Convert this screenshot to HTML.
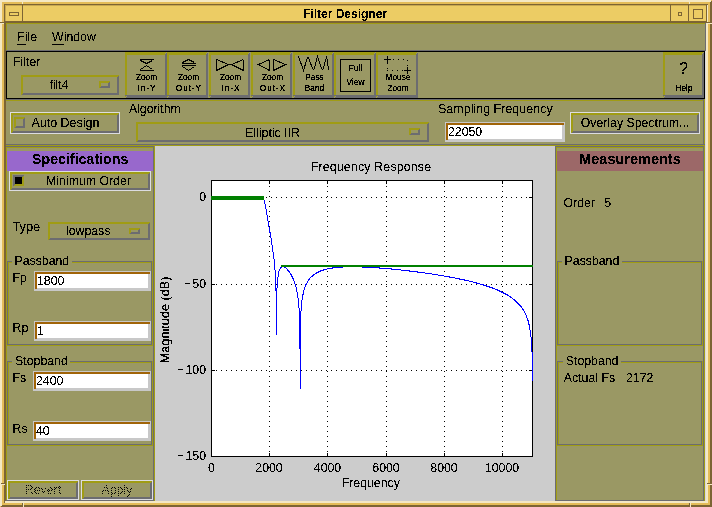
<!DOCTYPE html><html><head><meta charset="utf-8"><style>
html,body{margin:0;padding:0;}
body{width:712px;height:507px;position:relative;overflow:hidden;font-family:"Liberation Sans",sans-serif;}
div{position:absolute;box-sizing:border-box;}
.t{white-space:pre;filter:url(#crisp);-webkit-text-stroke:0.1px #000;}
</style></head><body>
<svg width="0" height="0" style="position:absolute"><filter id="crisp" x="-5%" y="-20%" width="110%" height="140%"><feComponentTransfer><feFuncA type="discrete" tableValues="0 1"/></feComponentTransfer></filter><filter id="crisp3" x="-20%" y="-5%" width="140%" height="110%"><feComponentTransfer><feFuncA type="discrete" tableValues="0 0 0 0 1 1 1 1 1 1"/></feComponentTransfer></filter><filter id="crisp4" x="-5%" y="-20%" width="110%" height="140%"><feComponentTransfer><feFuncA type="discrete" tableValues="0 0 0 1 1 1 1 1 1 1"/></feComponentTransfer></filter></svg>
<div style="left:0px;top:0px;width:712px;height:507px;background:#e4bc58;"></div>
<div style="left:0px;top:0px;width:711px;height:2px;background:#f4e8c4;"></div>
<div style="left:0px;top:0px;width:2px;height:506px;background:#f4e8c4;"></div>
<div style="left:710px;top:2px;width:2px;height:505px;background:#7c6434;"></div>
<div style="left:711px;top:1px;width:1px;height:1px;background:#7c6434;"></div>
<div style="left:2px;top:505px;width:710px;height:2px;background:#7c6434;"></div>
<div style="left:1px;top:506px;width:1px;height:1px;background:#7c6434;"></div>
<div style="left:4px;top:4px;width:704px;height:1px;background:#7c6434;"></div>
<div style="left:4px;top:4px;width:1px;height:499px;background:#7c6434;"></div>
<div style="left:5px;top:22px;width:1px;height:479px;background:#7c6434;"></div>
<div style="left:706px;top:22px;width:2px;height:481px;background:#f4e8c4;"></div>
<div style="left:707px;top:5px;width:1px;height:17px;background:#f4e8c4;"></div>
<div style="left:5px;top:501px;width:703px;height:2px;background:#f4e8c4;"></div>
<div style="left:5px;top:5px;width:702px;height:17px;background:#eccc64;"></div>
<div style="left:5px;top:5px;width:701px;height:1px;background:#c8a850;"></div>
<div style="left:5px;top:5px;width:1px;height:16px;background:#c8a850;"></div>
<div style="left:5px;top:21px;width:702px;height:2px;background:#7c6434;"></div>
<div style="left:706px;top:5px;width:1px;height:18px;background:#7c6434;"></div>
<div style="left:22px;top:5px;width:1px;height:17px;background:#7c6434;"></div>
<div style="left:670px;top:5px;width:1px;height:17px;background:#7c6434;"></div>
<div style="left:688px;top:5px;width:1px;height:17px;background:#7c6434;"></div>
<div style="left:9px;top:12px;width:10px;height:4px;background:#7c6434;"></div>
<div style="left:10px;top:13px;width:8px;height:2px;background:#eccc64;"></div>
<div style="left:678px;top:12px;width:4px;height:4px;background:#7c6434;"></div>
<div style="left:679px;top:13px;width:2px;height:2px;background:#eccc64;"></div>
<div style="left:693px;top:9px;width:10px;height:10px;background:#7c6434;"></div>
<div style="left:694px;top:10px;width:8px;height:8px;background:#eccc64;"></div>
<div style="left:22px;top:0px;width:1px;height:4px;background:#f4e8c4;"></div>
<div style="left:689px;top:0px;width:1px;height:4px;background:#f4e8c4;"></div>
<div style="left:0px;top:22px;width:4px;height:1px;background:#7c6434;"></div>
<div style="left:0px;top:23px;width:4px;height:1px;background:#f4e8c4;"></div>
<div style="left:706px;top:23px;width:6px;height:1px;background:#f4e8c4;"></div>
<div style="left:1px;top:483px;width:4px;height:1px;background:#7c6434;"></div>
<div style="left:1px;top:484px;width:4px;height:1px;background:#f4e8c4;"></div>
<div style="left:22px;top:503px;width:1px;height:4px;background:#7c6434;"></div>
<div style="left:23px;top:502px;width:1px;height:5px;background:#f4e8c4;"></div>
<div style="left:707px;top:483px;width:5px;height:1px;background:#7c6434;"></div>
<div style="left:707px;top:484px;width:5px;height:1px;background:#f4e8c4;"></div>
<div style="left:689px;top:503px;width:1px;height:4px;background:#7c6434;"></div>
<div style="left:690px;top:502px;width:1px;height:5px;background:#f4e8c4;"></div>
<div style="left:706px;top:22px;width:6px;height:1px;background:#7c6434;"></div>
<div class="t" style="left:45px;width:600px;text-align:center;top:8.34px;font-size:12px;line-height:12px;font-weight:bold;color:#000;">Filter Designer</div>
<div style="left:6px;top:23px;width:700px;height:478px;background:#9a9864;"></div>
<div style="left:705px;top:23px;width:1px;height:478px;background:#d8d8dc;"></div>
<div style="left:6px;top:23px;width:699px;height:1px;background:#a09c14;"></div>
<div style="left:6px;top:23px;width:1px;height:28px;background:#a09c14;"></div>
<div style="left:6px;top:50px;width:700px;height:1px;background:#6c6c70;"></div>
<div style="left:705px;top:23px;width:1px;height:28px;background:#6c6c70;"></div>
<div class="t" style="left:17.3px;top:31.29px;font-size:12.3px;line-height:12.3px;font-weight:normal;color:#000;">File</div>
<div style="left:17px;top:44px;width:9px;height:1px;background:#000;"></div>
<div class="t" style="left:52.1px;top:31.29px;font-size:12.3px;line-height:12.3px;font-weight:normal;color:#000;">Window</div>
<div style="left:52px;top:44px;width:12px;height:1px;background:#000;"></div>
<div style="left:6px;top:51px;width:699px;height:48px;background:#000;"></div>
<div style="left:7px;top:52px;width:697px;height:46px;background:#9a9864;"></div>
<div class="t" style="left:13.1px;top:56.39px;font-size:12.3px;line-height:12.3px;font-weight:normal;color:#000;">Filter</div>
<div style="left:21px;top:75px;width:98px;height:2px;background:#a09c14;"></div>
<div style="left:21px;top:75px;width:2px;height:20px;background:#a09c14;"></div>
<div style="left:22px;top:94px;width:97px;height:1px;background:#6c6c70;"></div>
<div style="left:118px;top:76px;width:1px;height:19px;background:#6c6c70;"></div>
<div style="left:23px;top:93px;width:96px;height:1px;background:#6c6c70;"></div>
<div style="left:117px;top:77px;width:1px;height:18px;background:#6c6c70;"></div>
<div class="t" style="left:-241px;width:600px;text-align:center;top:79.09px;font-size:12.3px;line-height:12.3px;font-weight:normal;color:#000;">filt4</div>
<div style="left:99px;top:81px;width:11px;height:2px;background:#a09c14;"></div>
<div style="left:99px;top:81px;width:2px;height:7px;background:#a09c14;"></div>
<div style="left:100px;top:87px;width:10px;height:1px;background:#6c6c70;"></div>
<div style="left:109px;top:82px;width:1px;height:6px;background:#6c6c70;"></div>
<div style="left:101px;top:86px;width:9px;height:1px;background:#6c6c70;"></div>
<div style="left:108px;top:83px;width:1px;height:5px;background:#6c6c70;"></div>
<div style="left:125px;top:52px;width:41px;height:1px;background:#a09c14;"></div>
<div style="left:125px;top:53px;width:40px;height:1px;background:#a09c14;"></div>
<div style="left:125px;top:54px;width:42px;height:1px;background:#a09c14;"></div>
<div style="left:125px;top:52px;width:1px;height:45px;background:#a09c14;"></div>
<div style="left:126px;top:52px;width:1px;height:44px;background:#a09c14;"></div>
<div style="left:126px;top:97px;width:41px;height:1px;background:#6c6c70;"></div>
<div style="left:127px;top:96px;width:40px;height:1px;background:#6c6c70;"></div>
<div style="left:125px;top:95px;width:42px;height:1px;background:#6c6c70;"></div>
<div style="left:166px;top:53px;width:1px;height:45px;background:#6c6c70;"></div>
<div style="left:165px;top:54px;width:1px;height:44px;background:#6c6c70;"></div>
<div style="left:167px;top:52px;width:40px;height:1px;background:#a09c14;"></div>
<div style="left:167px;top:53px;width:39px;height:1px;background:#a09c14;"></div>
<div style="left:167px;top:54px;width:41px;height:1px;background:#a09c14;"></div>
<div style="left:167px;top:52px;width:1px;height:45px;background:#a09c14;"></div>
<div style="left:168px;top:52px;width:1px;height:44px;background:#a09c14;"></div>
<div style="left:168px;top:97px;width:40px;height:1px;background:#6c6c70;"></div>
<div style="left:169px;top:96px;width:39px;height:1px;background:#6c6c70;"></div>
<div style="left:167px;top:95px;width:41px;height:1px;background:#6c6c70;"></div>
<div style="left:207px;top:53px;width:1px;height:45px;background:#6c6c70;"></div>
<div style="left:206px;top:54px;width:1px;height:44px;background:#6c6c70;"></div>
<div style="left:209px;top:52px;width:40px;height:1px;background:#a09c14;"></div>
<div style="left:209px;top:53px;width:39px;height:1px;background:#a09c14;"></div>
<div style="left:209px;top:54px;width:41px;height:1px;background:#a09c14;"></div>
<div style="left:209px;top:52px;width:1px;height:45px;background:#a09c14;"></div>
<div style="left:210px;top:52px;width:1px;height:44px;background:#a09c14;"></div>
<div style="left:210px;top:97px;width:40px;height:1px;background:#6c6c70;"></div>
<div style="left:211px;top:96px;width:39px;height:1px;background:#6c6c70;"></div>
<div style="left:209px;top:95px;width:41px;height:1px;background:#6c6c70;"></div>
<div style="left:249px;top:53px;width:1px;height:45px;background:#6c6c70;"></div>
<div style="left:248px;top:54px;width:1px;height:44px;background:#6c6c70;"></div>
<div style="left:251px;top:52px;width:40px;height:1px;background:#a09c14;"></div>
<div style="left:251px;top:53px;width:39px;height:1px;background:#a09c14;"></div>
<div style="left:251px;top:54px;width:41px;height:1px;background:#a09c14;"></div>
<div style="left:251px;top:52px;width:1px;height:45px;background:#a09c14;"></div>
<div style="left:252px;top:52px;width:1px;height:44px;background:#a09c14;"></div>
<div style="left:252px;top:97px;width:40px;height:1px;background:#6c6c70;"></div>
<div style="left:253px;top:96px;width:39px;height:1px;background:#6c6c70;"></div>
<div style="left:251px;top:95px;width:41px;height:1px;background:#6c6c70;"></div>
<div style="left:291px;top:53px;width:1px;height:45px;background:#6c6c70;"></div>
<div style="left:290px;top:54px;width:1px;height:44px;background:#6c6c70;"></div>
<div style="left:293px;top:52px;width:40px;height:1px;background:#a09c14;"></div>
<div style="left:293px;top:53px;width:39px;height:1px;background:#a09c14;"></div>
<div style="left:293px;top:54px;width:41px;height:1px;background:#a09c14;"></div>
<div style="left:293px;top:52px;width:1px;height:45px;background:#a09c14;"></div>
<div style="left:294px;top:52px;width:1px;height:44px;background:#a09c14;"></div>
<div style="left:294px;top:97px;width:40px;height:1px;background:#6c6c70;"></div>
<div style="left:295px;top:96px;width:39px;height:1px;background:#6c6c70;"></div>
<div style="left:293px;top:95px;width:41px;height:1px;background:#6c6c70;"></div>
<div style="left:333px;top:53px;width:1px;height:45px;background:#6c6c70;"></div>
<div style="left:332px;top:54px;width:1px;height:44px;background:#6c6c70;"></div>
<div style="left:334px;top:52px;width:41px;height:1px;background:#a09c14;"></div>
<div style="left:334px;top:53px;width:40px;height:1px;background:#a09c14;"></div>
<div style="left:334px;top:54px;width:42px;height:1px;background:#a09c14;"></div>
<div style="left:334px;top:52px;width:1px;height:45px;background:#a09c14;"></div>
<div style="left:335px;top:52px;width:1px;height:44px;background:#a09c14;"></div>
<div style="left:335px;top:97px;width:41px;height:1px;background:#6c6c70;"></div>
<div style="left:336px;top:96px;width:40px;height:1px;background:#6c6c70;"></div>
<div style="left:334px;top:95px;width:42px;height:1px;background:#6c6c70;"></div>
<div style="left:375px;top:53px;width:1px;height:45px;background:#6c6c70;"></div>
<div style="left:374px;top:54px;width:1px;height:44px;background:#6c6c70;"></div>
<div style="left:376px;top:52px;width:41px;height:1px;background:#a09c14;"></div>
<div style="left:376px;top:53px;width:40px;height:1px;background:#a09c14;"></div>
<div style="left:376px;top:54px;width:42px;height:1px;background:#a09c14;"></div>
<div style="left:376px;top:52px;width:1px;height:45px;background:#a09c14;"></div>
<div style="left:377px;top:52px;width:1px;height:44px;background:#a09c14;"></div>
<div style="left:377px;top:97px;width:41px;height:1px;background:#6c6c70;"></div>
<div style="left:378px;top:96px;width:40px;height:1px;background:#6c6c70;"></div>
<div style="left:376px;top:95px;width:42px;height:1px;background:#6c6c70;"></div>
<div style="left:417px;top:53px;width:1px;height:45px;background:#6c6c70;"></div>
<div style="left:416px;top:54px;width:1px;height:44px;background:#6c6c70;"></div>
<div style="left:663px;top:52px;width:40px;height:1px;background:#a09c14;"></div>
<div style="left:663px;top:53px;width:39px;height:1px;background:#a09c14;"></div>
<div style="left:663px;top:54px;width:41px;height:1px;background:#a09c14;"></div>
<div style="left:663px;top:52px;width:1px;height:45px;background:#a09c14;"></div>
<div style="left:664px;top:52px;width:1px;height:44px;background:#a09c14;"></div>
<div style="left:664px;top:97px;width:40px;height:1px;background:#6c6c70;"></div>
<div style="left:665px;top:96px;width:39px;height:1px;background:#6c6c70;"></div>
<div style="left:663px;top:95px;width:41px;height:1px;background:#6c6c70;"></div>
<div style="left:703px;top:53px;width:1px;height:45px;background:#6c6c70;"></div>
<div style="left:702px;top:54px;width:1px;height:44px;background:#6c6c70;"></div>
<svg style="position:absolute;left:0;top:0" width="712" height="507" shape-rendering="crispEdges"><path d="M139.5 59.5H153.5M139.5 70.5H153.5M140.5 60.5L146.5 63.5L152.5 60.5M140.5 69.5L146.5 65.5L152.5 69.5" stroke="#000" stroke-width="1" fill="none"/><path d="M181.5 63.5H195.5M181.5 65.5H195.5M182.5 62.5L188.5 59.5L194.5 62.5M182.5 66.5L188.5 70.5L194.5 66.5" stroke="#000" stroke-width="1" fill="none"/><path d="M216.5 59.5V70.5M216.5 59.5L228.5 64.5L216.5 70.5M243.5 59.5V70.5M243.5 59.5L231.5 64.5L243.5 70.5" stroke="#000" stroke-width="1" fill="none"/><path d="M269.5 59.5V70.5M269.5 59.5L258.5 64.5L269.5 70.5M273.5 59.5V70.5M273.5 59.5L285.5 64.5L273.5 70.5" stroke="#000" stroke-width="1" fill="none"/><path d="M298.5 56.5L303.5 70.5L306.5 60.5L307.5 57.5L308.5 57.5L309.5 60.5L312.5 68.5L313.5 69.5L314.5 68.5L316.5 59.5L317.5 56.5L318.5 59.5L321.5 68.5L322.5 69.5L323.5 68.5L325.5 60.5L326.5 57.5L327.5 60.5L328.5 70.5" stroke="#000" stroke-width="1" fill="none"/><rect x="340.5" y="59.5" width="30" height="32" stroke="#000" stroke-width="1" fill="none"/><path d="M384 59.5H391M387.5 56V64M404 70.5H411M407.5 67V74" stroke="#000" stroke-width="1" fill="none"/><path d="M393 59h1v1h-1zM398 59h1v1h-1zM403 59h1v1h-1zM407 60h1v1h-1zM407 65h1v1h-1zM387 68h1v1h-1zM387 70h1v1h-1zM392 70h1v1h-1zM397 70h1v1h-1zM402 70h1v1h-1z" fill="#000"/></svg>
<div class="t" style="left:-153.5px;width:600px;text-align:center;top:73.27px;font-size:8.3px;line-height:8.3px;font-weight:normal;color:#000;filter:url(#crisp4);-webkit-text-stroke:0">Zoom</div>
<div class="t" style="left:-153.05px;width:600px;text-align:center;top:84.27px;font-size:8.3px;line-height:8.3px;font-weight:normal;color:#000;filter:url(#crisp4);-webkit-text-stroke:0;letter-spacing:0.9px;">In-Y</div>
<div class="t" style="left:-111.5px;width:600px;text-align:center;top:73.27px;font-size:8.3px;line-height:8.3px;font-weight:normal;color:#000;filter:url(#crisp4);-webkit-text-stroke:0">Zoom</div>
<div class="t" style="left:-111.05000000000001px;width:600px;text-align:center;top:84.27px;font-size:8.3px;line-height:8.3px;font-weight:normal;color:#000;filter:url(#crisp4);-webkit-text-stroke:0;letter-spacing:0.9px;">Out-Y</div>
<div class="t" style="left:-69.5px;width:600px;text-align:center;top:73.27px;font-size:8.3px;line-height:8.3px;font-weight:normal;color:#000;filter:url(#crisp4);-webkit-text-stroke:0">Zoom</div>
<div class="t" style="left:-69.05000000000001px;width:600px;text-align:center;top:84.27px;font-size:8.3px;line-height:8.3px;font-weight:normal;color:#000;filter:url(#crisp4);-webkit-text-stroke:0;letter-spacing:0.9px;">In-X</div>
<div class="t" style="left:-27.5px;width:600px;text-align:center;top:73.27px;font-size:8.3px;line-height:8.3px;font-weight:normal;color:#000;filter:url(#crisp4);-webkit-text-stroke:0">Zoom</div>
<div class="t" style="left:-27.05000000000001px;width:600px;text-align:center;top:84.27px;font-size:8.3px;line-height:8.3px;font-weight:normal;color:#000;filter:url(#crisp4);-webkit-text-stroke:0;letter-spacing:0.9px;">Out-X</div>
<div class="t" style="left:14.5px;width:600px;text-align:center;top:73.27px;font-size:8.3px;line-height:8.3px;font-weight:normal;color:#000;filter:url(#crisp4);-webkit-text-stroke:0">Pass</div>
<div class="t" style="left:14.5px;width:600px;text-align:center;top:84.27px;font-size:8.3px;line-height:8.3px;font-weight:normal;color:#000;filter:url(#crisp4);-webkit-text-stroke:0;">Band</div>
<div class="t" style="left:98px;width:600px;text-align:center;top:73.27px;font-size:8.3px;line-height:8.3px;font-weight:normal;color:#000;filter:url(#crisp4);-webkit-text-stroke:0">Mouse</div>
<div class="t" style="left:98px;width:600px;text-align:center;top:84.27px;font-size:8.3px;line-height:8.3px;font-weight:normal;color:#000;filter:url(#crisp4);-webkit-text-stroke:0;">Zoom</div>
<div class="t" style="left:55.5px;width:600px;text-align:center;top:64.47px;font-size:8.3px;line-height:8.3px;font-weight:normal;color:#000;filter:url(#crisp4);-webkit-text-stroke:0">Full</div>
<div class="t" style="left:55.5px;width:600px;text-align:center;top:78.47px;font-size:8.3px;line-height:8.3px;font-weight:normal;color:#000;filter:url(#crisp4);-webkit-text-stroke:0">View</div>
<div class="t" style="left:383.5px;width:600px;text-align:center;top:60.96px;font-size:16px;line-height:16px;font-weight:normal;color:#000;">?</div>
<div class="t" style="left:384px;width:600px;text-align:center;top:83.97px;font-size:8.3px;line-height:8.3px;font-weight:normal;color:#000;filter:url(#crisp4);-webkit-text-stroke:0">Help</div>
<div style="left:6px;top:99px;width:699px;height:1px;background:#6c6c70;"></div>
<div style="left:6px;top:100px;width:698px;height:1px;background:#a09c14;"></div>
<div style="left:703px;top:100px;width:1px;height:45px;background:#6c6c70;"></div>
<div style="left:704px;top:99px;width:1px;height:47px;background:#a09c14;"></div>
<div style="left:10px;top:112px;width:110px;height:22px;background:#dcdce0;"></div>
<div style="left:11px;top:113px;width:108px;height:20px;background:#9a9864;"></div>
<div style="left:11px;top:113px;width:108px;height:2px;background:#a09c14;"></div>
<div style="left:11px;top:113px;width:2px;height:20px;background:#a09c14;"></div>
<div style="left:12px;top:132px;width:107px;height:1px;background:#6c6c70;"></div>
<div style="left:118px;top:114px;width:1px;height:19px;background:#6c6c70;"></div>
<div style="left:13px;top:131px;width:106px;height:1px;background:#6c6c70;"></div>
<div style="left:117px;top:115px;width:1px;height:18px;background:#6c6c70;"></div>
<div style="left:14px;top:117px;width:11px;height:2px;background:#a09c14;"></div>
<div style="left:14px;top:117px;width:2px;height:11px;background:#a09c14;"></div>
<div style="left:15px;top:127px;width:10px;height:1px;background:#6c6c70;"></div>
<div style="left:24px;top:118px;width:1px;height:10px;background:#6c6c70;"></div>
<div style="left:16px;top:126px;width:9px;height:1px;background:#6c6c70;"></div>
<div style="left:23px;top:119px;width:1px;height:9px;background:#6c6c70;"></div>
<div class="t" style="left:31.4px;top:117.12px;font-size:12.5px;line-height:12.5px;font-weight:normal;color:#000;">Auto Design</div>
<div class="t" style="left:128.9px;top:103.39px;font-size:12.3px;line-height:12.3px;font-weight:normal;color:#000;">Algorithm</div>
<div style="left:136px;top:122px;width:293px;height:2px;background:#a09c14;"></div>
<div style="left:136px;top:122px;width:2px;height:20px;background:#a09c14;"></div>
<div style="left:137px;top:141px;width:292px;height:1px;background:#6c6c70;"></div>
<div style="left:428px;top:123px;width:1px;height:19px;background:#6c6c70;"></div>
<div style="left:138px;top:140px;width:291px;height:1px;background:#6c6c70;"></div>
<div style="left:427px;top:124px;width:1px;height:18px;background:#6c6c70;"></div>
<div class="t" style="left:-27.5px;width:600px;text-align:center;top:126.79px;font-size:12.3px;line-height:12.3px;font-weight:normal;color:#000;">Elliptic IIR</div>
<div style="left:409px;top:128px;width:11px;height:2px;background:#a09c14;"></div>
<div style="left:409px;top:128px;width:2px;height:7px;background:#a09c14;"></div>
<div style="left:410px;top:134px;width:10px;height:1px;background:#6c6c70;"></div>
<div style="left:419px;top:129px;width:1px;height:6px;background:#6c6c70;"></div>
<div style="left:411px;top:133px;width:9px;height:1px;background:#6c6c70;"></div>
<div style="left:418px;top:130px;width:1px;height:5px;background:#6c6c70;"></div>
<div class="t" style="left:438.0px;top:103.22px;font-size:12.5px;line-height:12.5px;font-weight:normal;color:#000;">Sampling Frequency</div>
<div style="left:445px;top:122px;width:120px;height:20px;background:#c8c8c8;"></div>
<div style="left:446px;top:123px;width:118px;height:2px;background:#a06408;"></div>
<div style="left:446px;top:123px;width:2px;height:17px;background:#a06408;"></div>
<div style="left:448px;top:125px;width:114px;height:14px;background:#fff;"></div>
<div class="t" style="left:448px;top:125.59px;font-size:12.3px;line-height:12.3px;font-weight:normal;color:#000;">22050</div>
<div style="left:570px;top:112px;width:130px;height:22px;background:#dcdce0;"></div>
<div style="left:571px;top:113px;width:128px;height:20px;background:#9a9864;"></div>
<div style="left:571px;top:113px;width:128px;height:2px;background:#a09c14;"></div>
<div style="left:571px;top:113px;width:2px;height:20px;background:#a09c14;"></div>
<div style="left:572px;top:132px;width:127px;height:1px;background:#6c6c70;"></div>
<div style="left:698px;top:114px;width:1px;height:19px;background:#6c6c70;"></div>
<div style="left:573px;top:131px;width:126px;height:1px;background:#6c6c70;"></div>
<div style="left:697px;top:115px;width:1px;height:18px;background:#6c6c70;"></div>
<div class="t" style="left:580.7px;top:117.29px;font-size:12.3px;line-height:12.3px;font-weight:normal;color:#000;">Overlay Spectrum...</div>
<div style="left:6px;top:144px;width:699px;height:1px;background:#6c6c70;"></div>
<div style="left:6px;top:145px;width:699px;height:1px;background:#a09c14;"></div>
<div style="left:6px;top:146px;width:149px;height:355px;background:#9a9864;"></div>
<div style="left:6px;top:146px;width:149px;height:1px;background:#6c6c70;"></div>
<div style="left:6px;top:147px;width:148px;height:1px;background:#a09c14;"></div>
<div style="left:153px;top:147px;width:1px;height:354px;background:#6c6c70;"></div>
<div style="left:154px;top:146px;width:1px;height:355px;background:#a09c14;"></div>
<div style="left:6px;top:500px;width:148px;height:1px;background:#6c6c70;"></div>
<div style="left:6px;top:147px;width:1px;height:353px;background:#a09c14;"></div>
<div style="left:7px;top:151px;width:146px;height:20px;background:#9868cc;"></div>
<div class="t" style="left:-219.8px;width:600px;text-align:center;top:152.48px;font-size:14.2px;line-height:14.2px;font-weight:bold;color:#000;">Specifications</div>
<div style="left:9px;top:171px;width:142px;height:20px;background:#dcdce0;"></div>
<div style="left:10px;top:172px;width:140px;height:18px;background:#9a9864;"></div>
<div style="left:10px;top:172px;width:140px;height:2px;background:#a09c14;"></div>
<div style="left:10px;top:172px;width:2px;height:18px;background:#a09c14;"></div>
<div style="left:11px;top:189px;width:139px;height:1px;background:#6c6c70;"></div>
<div style="left:149px;top:173px;width:1px;height:17px;background:#6c6c70;"></div>
<div style="left:12px;top:188px;width:138px;height:1px;background:#6c6c70;"></div>
<div style="left:148px;top:174px;width:1px;height:16px;background:#6c6c70;"></div>
<div style="left:13px;top:175px;width:11px;height:2px;background:#6c6c70;"></div>
<div style="left:13px;top:175px;width:2px;height:11px;background:#6c6c70;"></div>
<div style="left:14px;top:185px;width:10px;height:1px;background:#a09c14;"></div>
<div style="left:23px;top:176px;width:1px;height:10px;background:#a09c14;"></div>
<div style="left:15px;top:184px;width:9px;height:1px;background:#a09c14;"></div>
<div style="left:22px;top:177px;width:1px;height:9px;background:#a09c14;"></div>
<div style="left:15px;top:177px;width:7px;height:7px;background:#000;"></div>
<div class="t" style="left:46.1px;top:175.49px;font-size:12.3px;line-height:12.3px;font-weight:normal;color:#000;">Minimum Order</div>
<div class="t" style="left:12.4px;top:221.26px;font-size:12.8px;line-height:12.8px;font-weight:normal;color:#000;">Type</div>
<div style="left:48px;top:222px;width:102px;height:2px;background:#a09c14;"></div>
<div style="left:48px;top:222px;width:2px;height:18px;background:#a09c14;"></div>
<div style="left:49px;top:239px;width:101px;height:1px;background:#6c6c70;"></div>
<div style="left:149px;top:223px;width:1px;height:17px;background:#6c6c70;"></div>
<div style="left:50px;top:238px;width:100px;height:1px;background:#6c6c70;"></div>
<div style="left:148px;top:224px;width:1px;height:16px;background:#6c6c70;"></div>
<div class="t" style="left:-211.8px;width:600px;text-align:center;top:224.89px;font-size:12.3px;line-height:12.3px;font-weight:normal;color:#000;">lowpass</div>
<div style="left:129px;top:228px;width:11px;height:2px;background:#a09c14;"></div>
<div style="left:129px;top:228px;width:2px;height:6px;background:#a09c14;"></div>
<div style="left:130px;top:233px;width:10px;height:1px;background:#6c6c70;"></div>
<div style="left:139px;top:229px;width:1px;height:5px;background:#6c6c70;"></div>
<div style="left:131px;top:232px;width:9px;height:1px;background:#6c6c70;"></div>
<div style="left:138px;top:230px;width:1px;height:4px;background:#6c6c70;"></div>
<div style="left:7px;top:261px;width:146px;height:85px;background:#a09c14;"></div>
<div style="left:7px;top:261px;width:145px;height:84px;background:#6c6c70;"></div>
<div style="left:8px;top:262px;width:143px;height:82px;background:#a09c14;"></div>
<div style="left:9px;top:263px;width:142px;height:81px;background:#9a9864;"></div>
<div style="left:11.5px;top:256px;width:60px;height:10px;background:#9a9864;"></div>
<div class="t" style="left:14.5px;top:255.09px;font-size:12.3px;line-height:12.3px;font-weight:normal;color:#000;">Passband</div>
<div style="left:7px;top:361px;width:146px;height:85px;background:#a09c14;"></div>
<div style="left:7px;top:361px;width:145px;height:84px;background:#6c6c70;"></div>
<div style="left:8px;top:362px;width:143px;height:82px;background:#a09c14;"></div>
<div style="left:9px;top:363px;width:142px;height:81px;background:#9a9864;"></div>
<div style="left:12.1px;top:356px;width:58px;height:10px;background:#9a9864;"></div>
<div class="t" style="left:15.1px;top:355.09px;font-size:12.3px;line-height:12.3px;font-weight:normal;color:#000;">Stopband</div>
<div class="t" style="left:12.4px;top:272.19px;font-size:12.3px;line-height:12.3px;font-weight:normal;color:#000;">Fp</div>
<div style="left:34px;top:271px;width:117px;height:20px;background:#c8c8c8;"></div>
<div style="left:35px;top:272px;width:115px;height:2px;background:#a06408;"></div>
<div style="left:35px;top:272px;width:2px;height:17px;background:#a06408;"></div>
<div style="left:37px;top:274px;width:111px;height:14px;background:#fff;"></div>
<div class="t" style="left:37px;top:274.59px;font-size:12.3px;line-height:12.3px;font-weight:normal;color:#000;">1800</div>
<div class="t" style="left:12.6px;top:321.59px;font-size:12.3px;line-height:12.3px;font-weight:normal;color:#000;">Rp</div>
<div style="left:34px;top:321px;width:117px;height:20px;background:#c8c8c8;"></div>
<div style="left:35px;top:322px;width:115px;height:2px;background:#a06408;"></div>
<div style="left:35px;top:322px;width:2px;height:17px;background:#a06408;"></div>
<div style="left:37px;top:324px;width:111px;height:14px;background:#fff;"></div>
<div class="t" style="left:37px;top:324.59px;font-size:12.3px;line-height:12.3px;font-weight:normal;color:#000;">1</div>
<div class="t" style="left:12.6px;top:372.09px;font-size:12.3px;line-height:12.3px;font-weight:normal;color:#000;">Fs</div>
<div style="left:33px;top:371px;width:118px;height:20px;background:#c8c8c8;"></div>
<div style="left:34px;top:372px;width:116px;height:2px;background:#a06408;"></div>
<div style="left:34px;top:372px;width:2px;height:17px;background:#a06408;"></div>
<div style="left:36px;top:374px;width:112px;height:14px;background:#fff;"></div>
<div class="t" style="left:36px;top:374.59px;font-size:12.3px;line-height:12.3px;font-weight:normal;color:#000;">2400</div>
<div class="t" style="left:12.6px;top:422.59px;font-size:12.3px;line-height:12.3px;font-weight:normal;color:#000;">Rs</div>
<div style="left:33px;top:421px;width:118px;height:20px;background:#c8c8c8;"></div>
<div style="left:34px;top:422px;width:116px;height:2px;background:#a06408;"></div>
<div style="left:34px;top:422px;width:2px;height:17px;background:#a06408;"></div>
<div style="left:36px;top:424px;width:112px;height:14px;background:#fff;"></div>
<div class="t" style="left:36px;top:424.59px;font-size:12.3px;line-height:12.3px;font-weight:normal;color:#000;">40</div>
<div style="left:7px;top:480px;width:72px;height:20px;background:#dcdce0;"></div>
<div style="left:8px;top:481px;width:70px;height:18px;background:#9a9864;"></div>
<div style="left:8px;top:481px;width:70px;height:2px;background:#a09c14;"></div>
<div style="left:8px;top:481px;width:2px;height:18px;background:#a09c14;"></div>
<div style="left:9px;top:498px;width:69px;height:1px;background:#6c6c70;"></div>
<div style="left:77px;top:482px;width:1px;height:17px;background:#6c6c70;"></div>
<div style="left:10px;top:497px;width:68px;height:1px;background:#6c6c70;"></div>
<div style="left:76px;top:483px;width:1px;height:16px;background:#6c6c70;"></div>
<div style="left:8px;top:482px;width:70px;height:16px;-webkit-mask-image:repeating-conic-gradient(#000 0 25%,transparent 0 50%);-webkit-mask-size:2px 2px;mask-image:repeating-conic-gradient(#000 0 25%,transparent 0 50%);mask-size:2px 2px;"><div class="t" style="left:0;width:70px;text-align:center;top:1.6px;font-size:12.3px;line-height:12.3px;">Revert</div></div>
<div style="left:81px;top:480px;width:72px;height:20px;background:#dcdce0;"></div>
<div style="left:82px;top:481px;width:70px;height:18px;background:#9a9864;"></div>
<div style="left:82px;top:481px;width:70px;height:2px;background:#a09c14;"></div>
<div style="left:82px;top:481px;width:2px;height:18px;background:#a09c14;"></div>
<div style="left:83px;top:498px;width:69px;height:1px;background:#6c6c70;"></div>
<div style="left:151px;top:482px;width:1px;height:17px;background:#6c6c70;"></div>
<div style="left:84px;top:497px;width:68px;height:1px;background:#6c6c70;"></div>
<div style="left:150px;top:483px;width:1px;height:16px;background:#6c6c70;"></div>
<div style="left:82px;top:482px;width:70px;height:16px;-webkit-mask-image:repeating-conic-gradient(#000 0 25%,transparent 0 50%);-webkit-mask-size:2px 2px;mask-image:repeating-conic-gradient(#000 0 25%,transparent 0 50%);mask-size:2px 2px;"><div class="t" style="left:0;width:70px;text-align:center;top:1.6px;font-size:12.3px;line-height:12.3px;">Apply</div></div>
<div style="left:155px;top:146px;width:400px;height:355px;background:#cccccc;"></div>
<svg style="position:absolute;left:0;top:0" width="712" height="507" shape-rendering="crispEdges"><rect x="211" y="180" width="322" height="277" fill="#fff"/><path d="M269 181h1v1h-1zM269 186h1v1h-1zM269 191h1v1h-1zM269 196h1v1h-1zM269 201h1v1h-1zM269 206h1v1h-1zM269 211h1v1h-1zM269 216h1v1h-1zM269 221h1v1h-1zM269 226h1v1h-1zM269 231h1v1h-1zM269 236h1v1h-1zM269 241h1v1h-1zM269 246h1v1h-1zM269 251h1v1h-1zM269 256h1v1h-1zM269 261h1v1h-1zM269 266h1v1h-1zM269 271h1v1h-1zM269 276h1v1h-1zM269 281h1v1h-1zM269 286h1v1h-1zM269 291h1v1h-1zM269 296h1v1h-1zM269 301h1v1h-1zM269 306h1v1h-1zM269 311h1v1h-1zM269 316h1v1h-1zM269 321h1v1h-1zM269 326h1v1h-1zM269 331h1v1h-1zM269 336h1v1h-1zM269 341h1v1h-1zM269 346h1v1h-1zM269 351h1v1h-1zM269 356h1v1h-1zM269 361h1v1h-1zM269 366h1v1h-1zM269 371h1v1h-1zM269 376h1v1h-1zM269 381h1v1h-1zM269 386h1v1h-1zM269 391h1v1h-1zM269 396h1v1h-1zM269 401h1v1h-1zM269 406h1v1h-1zM269 411h1v1h-1zM269 416h1v1h-1zM269 421h1v1h-1zM269 426h1v1h-1zM269 431h1v1h-1zM269 436h1v1h-1zM269 441h1v1h-1zM269 446h1v1h-1zM269 451h1v1h-1zM327 181h1v1h-1zM327 186h1v1h-1zM327 191h1v1h-1zM327 196h1v1h-1zM327 201h1v1h-1zM327 206h1v1h-1zM327 211h1v1h-1zM327 216h1v1h-1zM327 221h1v1h-1zM327 226h1v1h-1zM327 231h1v1h-1zM327 236h1v1h-1zM327 241h1v1h-1zM327 246h1v1h-1zM327 251h1v1h-1zM327 256h1v1h-1zM327 261h1v1h-1zM327 266h1v1h-1zM327 271h1v1h-1zM327 276h1v1h-1zM327 281h1v1h-1zM327 286h1v1h-1zM327 291h1v1h-1zM327 296h1v1h-1zM327 301h1v1h-1zM327 306h1v1h-1zM327 311h1v1h-1zM327 316h1v1h-1zM327 321h1v1h-1zM327 326h1v1h-1zM327 331h1v1h-1zM327 336h1v1h-1zM327 341h1v1h-1zM327 346h1v1h-1zM327 351h1v1h-1zM327 356h1v1h-1zM327 361h1v1h-1zM327 366h1v1h-1zM327 371h1v1h-1zM327 376h1v1h-1zM327 381h1v1h-1zM327 386h1v1h-1zM327 391h1v1h-1zM327 396h1v1h-1zM327 401h1v1h-1zM327 406h1v1h-1zM327 411h1v1h-1zM327 416h1v1h-1zM327 421h1v1h-1zM327 426h1v1h-1zM327 431h1v1h-1zM327 436h1v1h-1zM327 441h1v1h-1zM327 446h1v1h-1zM327 451h1v1h-1zM386 181h1v1h-1zM386 186h1v1h-1zM386 191h1v1h-1zM386 196h1v1h-1zM386 201h1v1h-1zM386 206h1v1h-1zM386 211h1v1h-1zM386 216h1v1h-1zM386 221h1v1h-1zM386 226h1v1h-1zM386 231h1v1h-1zM386 236h1v1h-1zM386 241h1v1h-1zM386 246h1v1h-1zM386 251h1v1h-1zM386 256h1v1h-1zM386 261h1v1h-1zM386 266h1v1h-1zM386 271h1v1h-1zM386 276h1v1h-1zM386 281h1v1h-1zM386 286h1v1h-1zM386 291h1v1h-1zM386 296h1v1h-1zM386 301h1v1h-1zM386 306h1v1h-1zM386 311h1v1h-1zM386 316h1v1h-1zM386 321h1v1h-1zM386 326h1v1h-1zM386 331h1v1h-1zM386 336h1v1h-1zM386 341h1v1h-1zM386 346h1v1h-1zM386 351h1v1h-1zM386 356h1v1h-1zM386 361h1v1h-1zM386 366h1v1h-1zM386 371h1v1h-1zM386 376h1v1h-1zM386 381h1v1h-1zM386 386h1v1h-1zM386 391h1v1h-1zM386 396h1v1h-1zM386 401h1v1h-1zM386 406h1v1h-1zM386 411h1v1h-1zM386 416h1v1h-1zM386 421h1v1h-1zM386 426h1v1h-1zM386 431h1v1h-1zM386 436h1v1h-1zM386 441h1v1h-1zM386 446h1v1h-1zM386 451h1v1h-1zM444 181h1v1h-1zM444 186h1v1h-1zM444 191h1v1h-1zM444 196h1v1h-1zM444 201h1v1h-1zM444 206h1v1h-1zM444 211h1v1h-1zM444 216h1v1h-1zM444 221h1v1h-1zM444 226h1v1h-1zM444 231h1v1h-1zM444 236h1v1h-1zM444 241h1v1h-1zM444 246h1v1h-1zM444 251h1v1h-1zM444 256h1v1h-1zM444 261h1v1h-1zM444 266h1v1h-1zM444 271h1v1h-1zM444 276h1v1h-1zM444 281h1v1h-1zM444 286h1v1h-1zM444 291h1v1h-1zM444 296h1v1h-1zM444 301h1v1h-1zM444 306h1v1h-1zM444 311h1v1h-1zM444 316h1v1h-1zM444 321h1v1h-1zM444 326h1v1h-1zM444 331h1v1h-1zM444 336h1v1h-1zM444 341h1v1h-1zM444 346h1v1h-1zM444 351h1v1h-1zM444 356h1v1h-1zM444 361h1v1h-1zM444 366h1v1h-1zM444 371h1v1h-1zM444 376h1v1h-1zM444 381h1v1h-1zM444 386h1v1h-1zM444 391h1v1h-1zM444 396h1v1h-1zM444 401h1v1h-1zM444 406h1v1h-1zM444 411h1v1h-1zM444 416h1v1h-1zM444 421h1v1h-1zM444 426h1v1h-1zM444 431h1v1h-1zM444 436h1v1h-1zM444 441h1v1h-1zM444 446h1v1h-1zM444 451h1v1h-1zM502 181h1v1h-1zM502 186h1v1h-1zM502 191h1v1h-1zM502 196h1v1h-1zM502 201h1v1h-1zM502 206h1v1h-1zM502 211h1v1h-1zM502 216h1v1h-1zM502 221h1v1h-1zM502 226h1v1h-1zM502 231h1v1h-1zM502 236h1v1h-1zM502 241h1v1h-1zM502 246h1v1h-1zM502 251h1v1h-1zM502 256h1v1h-1zM502 261h1v1h-1zM502 266h1v1h-1zM502 271h1v1h-1zM502 276h1v1h-1zM502 281h1v1h-1zM502 286h1v1h-1zM502 291h1v1h-1zM502 296h1v1h-1zM502 301h1v1h-1zM502 306h1v1h-1zM502 311h1v1h-1zM502 316h1v1h-1zM502 321h1v1h-1zM502 326h1v1h-1zM502 331h1v1h-1zM502 336h1v1h-1zM502 341h1v1h-1zM502 346h1v1h-1zM502 351h1v1h-1zM502 356h1v1h-1zM502 361h1v1h-1zM502 366h1v1h-1zM502 371h1v1h-1zM502 376h1v1h-1zM502 381h1v1h-1zM502 386h1v1h-1zM502 391h1v1h-1zM502 396h1v1h-1zM502 401h1v1h-1zM502 406h1v1h-1zM502 411h1v1h-1zM502 416h1v1h-1zM502 421h1v1h-1zM502 426h1v1h-1zM502 431h1v1h-1zM502 436h1v1h-1zM502 441h1v1h-1zM502 446h1v1h-1zM502 451h1v1h-1zM216 197h1v1h-1zM221 197h1v1h-1zM226 197h1v1h-1zM231 197h1v1h-1zM236 197h1v1h-1zM241 197h1v1h-1zM246 197h1v1h-1zM251 197h1v1h-1zM256 197h1v1h-1zM261 197h1v1h-1zM266 197h1v1h-1zM271 197h1v1h-1zM276 197h1v1h-1zM281 197h1v1h-1zM286 197h1v1h-1zM291 197h1v1h-1zM296 197h1v1h-1zM301 197h1v1h-1zM306 197h1v1h-1zM311 197h1v1h-1zM316 197h1v1h-1zM321 197h1v1h-1zM326 197h1v1h-1zM331 197h1v1h-1zM336 197h1v1h-1zM341 197h1v1h-1zM346 197h1v1h-1zM351 197h1v1h-1zM356 197h1v1h-1zM361 197h1v1h-1zM366 197h1v1h-1zM371 197h1v1h-1zM376 197h1v1h-1zM381 197h1v1h-1zM386 197h1v1h-1zM391 197h1v1h-1zM396 197h1v1h-1zM401 197h1v1h-1zM406 197h1v1h-1zM411 197h1v1h-1zM416 197h1v1h-1zM421 197h1v1h-1zM426 197h1v1h-1zM431 197h1v1h-1zM436 197h1v1h-1zM441 197h1v1h-1zM446 197h1v1h-1zM451 197h1v1h-1zM456 197h1v1h-1zM461 197h1v1h-1zM466 197h1v1h-1zM471 197h1v1h-1zM476 197h1v1h-1zM481 197h1v1h-1zM486 197h1v1h-1zM491 197h1v1h-1zM496 197h1v1h-1zM501 197h1v1h-1zM506 197h1v1h-1zM511 197h1v1h-1zM516 197h1v1h-1zM521 197h1v1h-1zM526 197h1v1h-1zM531 197h1v1h-1zM216 284h1v1h-1zM221 284h1v1h-1zM226 284h1v1h-1zM231 284h1v1h-1zM236 284h1v1h-1zM241 284h1v1h-1zM246 284h1v1h-1zM251 284h1v1h-1zM256 284h1v1h-1zM261 284h1v1h-1zM266 284h1v1h-1zM271 284h1v1h-1zM276 284h1v1h-1zM281 284h1v1h-1zM286 284h1v1h-1zM291 284h1v1h-1zM296 284h1v1h-1zM301 284h1v1h-1zM306 284h1v1h-1zM311 284h1v1h-1zM316 284h1v1h-1zM321 284h1v1h-1zM326 284h1v1h-1zM331 284h1v1h-1zM336 284h1v1h-1zM341 284h1v1h-1zM346 284h1v1h-1zM351 284h1v1h-1zM356 284h1v1h-1zM361 284h1v1h-1zM366 284h1v1h-1zM371 284h1v1h-1zM376 284h1v1h-1zM381 284h1v1h-1zM386 284h1v1h-1zM391 284h1v1h-1zM396 284h1v1h-1zM401 284h1v1h-1zM406 284h1v1h-1zM411 284h1v1h-1zM416 284h1v1h-1zM421 284h1v1h-1zM426 284h1v1h-1zM431 284h1v1h-1zM436 284h1v1h-1zM441 284h1v1h-1zM446 284h1v1h-1zM451 284h1v1h-1zM456 284h1v1h-1zM461 284h1v1h-1zM466 284h1v1h-1zM471 284h1v1h-1zM476 284h1v1h-1zM481 284h1v1h-1zM486 284h1v1h-1zM491 284h1v1h-1zM496 284h1v1h-1zM501 284h1v1h-1zM506 284h1v1h-1zM511 284h1v1h-1zM516 284h1v1h-1zM521 284h1v1h-1zM526 284h1v1h-1zM531 284h1v1h-1zM216 370h1v1h-1zM221 370h1v1h-1zM226 370h1v1h-1zM231 370h1v1h-1zM236 370h1v1h-1zM241 370h1v1h-1zM246 370h1v1h-1zM251 370h1v1h-1zM256 370h1v1h-1zM261 370h1v1h-1zM266 370h1v1h-1zM271 370h1v1h-1zM276 370h1v1h-1zM281 370h1v1h-1zM286 370h1v1h-1zM291 370h1v1h-1zM296 370h1v1h-1zM301 370h1v1h-1zM306 370h1v1h-1zM311 370h1v1h-1zM316 370h1v1h-1zM321 370h1v1h-1zM326 370h1v1h-1zM331 370h1v1h-1zM336 370h1v1h-1zM341 370h1v1h-1zM346 370h1v1h-1zM351 370h1v1h-1zM356 370h1v1h-1zM361 370h1v1h-1zM366 370h1v1h-1zM371 370h1v1h-1zM376 370h1v1h-1zM381 370h1v1h-1zM386 370h1v1h-1zM391 370h1v1h-1zM396 370h1v1h-1zM401 370h1v1h-1zM406 370h1v1h-1zM411 370h1v1h-1zM416 370h1v1h-1zM421 370h1v1h-1zM426 370h1v1h-1zM431 370h1v1h-1zM436 370h1v1h-1zM441 370h1v1h-1zM446 370h1v1h-1zM451 370h1v1h-1zM456 370h1v1h-1zM461 370h1v1h-1zM466 370h1v1h-1zM471 370h1v1h-1zM476 370h1v1h-1zM481 370h1v1h-1zM486 370h1v1h-1zM491 370h1v1h-1zM496 370h1v1h-1zM501 370h1v1h-1zM506 370h1v1h-1zM511 370h1v1h-1zM516 370h1v1h-1zM521 370h1v1h-1zM526 370h1v1h-1zM531 370h1v1h-1zM269 180h1v4h-1zM269 453h1v4h-1zM327 180h1v4h-1zM327 453h1v4h-1zM386 180h1v4h-1zM386 453h1v4h-1zM444 180h1v4h-1zM444 453h1v4h-1zM502 180h1v4h-1zM502 453h1v4h-1zM211 197h4v1h-4zM529 197h4v1h-4zM211 284h4v1h-4zM529 284h4v1h-4zM211 370h4v1h-4zM529 370h4v1h-4z" fill="#000"/><path d="M211 180h322v1h-322zM211 456h322v1h-322zM211 180h1v277h-1zM532 180h1v277h-1z" fill="#000"/><polyline points="211.5,197.7 211.6,197.8 211.7,197.8 211.7,197.8 211.8,197.8 211.9,197.8 212.0,197.8 212.0,197.8 212.1,197.8 212.2,197.8 212.3,197.8 212.4,197.8 212.4,197.8 212.5,197.8 212.6,197.8 212.7,197.8 212.8,197.8 212.8,197.8 212.9,197.8 213.0,197.8 213.1,197.8 213.1,197.8 213.2,197.8 213.3,197.8 213.4,197.8 213.5,197.8 213.5,197.8 213.6,197.8 213.7,197.8 213.8,197.8 213.9,197.8 213.9,197.8 214.0,197.8 214.1,197.8 214.2,197.8 214.2,197.8 214.3,197.8 214.4,197.8 214.5,197.8 214.6,197.8 214.6,197.8 214.7,197.9 214.8,197.9 214.9,197.9 214.9,197.9 215.0,197.9 215.1,197.9 215.2,197.9 215.3,197.9 215.3,197.9 215.4,197.9 215.5,197.9 215.6,197.9 215.7,197.9 215.7,197.9 215.8,197.9 215.9,197.9 216.0,197.9 216.0,197.9 216.1,198.0 216.2,198.0 216.3,198.0 216.4,198.0 216.4,198.0 216.5,198.0 216.6,198.0 216.7,198.0 216.8,198.0 216.8,198.0 216.9,198.0 217.0,198.0 217.1,198.0 217.1,198.0 217.2,198.1 217.3,198.1 217.4,198.1 217.5,198.1 217.5,198.1 217.6,198.1 217.7,198.1 217.8,198.1 217.8,198.1 217.9,198.1 218.0,198.1 218.1,198.1 218.2,198.2 218.2,198.2 218.3,198.2 218.4,198.2 218.5,198.2 218.6,198.2 218.6,198.2 218.7,198.2 218.8,198.2 218.9,198.2 218.9,198.2 219.0,198.3 219.1,198.3 219.2,198.3 219.3,198.3 219.3,198.3 219.4,198.3 219.5,198.3 219.6,198.3 219.7,198.3 219.7,198.3 219.8,198.3 219.9,198.4 220.0,198.4 220.0,198.4 220.1,198.4 220.2,198.4 220.3,198.4 220.4,198.4 220.4,198.4 220.5,198.4 220.6,198.4 220.7,198.5 220.7,198.5 220.8,198.5 220.9,198.5 221.0,198.5 221.1,198.5 221.1,198.5 221.2,198.5 221.3,198.5 221.4,198.5 221.5,198.6 221.5,198.6 221.6,198.6 221.7,198.6 221.8,198.6 221.8,198.6 221.9,198.6 222.0,198.6 222.1,198.6 222.2,198.6 222.2,198.7 222.3,198.7 222.4,198.7 222.5,198.7 222.6,198.7 222.6,198.7 222.7,198.7 222.8,198.7 222.9,198.7 222.9,198.7 223.0,198.8 223.1,198.8 223.2,198.8 223.3,198.8 223.3,198.8 223.4,198.8 223.5,198.8 223.6,198.8 223.6,198.8 223.7,198.8 223.8,198.9 223.9,198.9 224.0,198.9 224.0,198.9 224.1,198.9 224.2,198.9 224.3,198.9 224.4,198.9 224.4,198.9 224.5,198.9 224.6,198.9 224.7,199.0 224.7,199.0 224.8,199.0 224.9,199.0 225.0,199.0 225.1,199.0 225.1,199.0 225.2,199.0 225.3,199.0 225.4,199.0 225.4,199.0 225.5,199.1 225.6,199.1 225.7,199.1 225.8,199.1 225.8,199.1 225.9,199.1 226.0,199.1 226.1,199.1 226.2,199.1 226.2,199.1 226.3,199.1 226.4,199.1 226.5,199.2 226.5,199.2 226.6,199.2 226.7,199.2 226.8,199.2 226.9,199.2 226.9,199.2 227.0,199.2 227.1,199.2 227.2,199.2 227.3,199.2 227.3,199.2 227.4,199.2 227.5,199.3 227.6,199.3 227.6,199.3 227.7,199.3 227.8,199.3 227.9,199.3 228.0,199.3 228.0,199.3 228.1,199.3 228.2,199.3 228.3,199.3 228.3,199.3 228.4,199.3 228.5,199.3 228.6,199.3 228.7,199.3 228.7,199.3 228.8,199.4 228.9,199.4 229.0,199.4 229.1,199.4 229.1,199.4 229.2,199.4 229.3,199.4 229.4,199.4 229.4,199.4 229.5,199.4 229.6,199.4 229.7,199.4 229.8,199.4 229.8,199.4 229.9,199.4 230.0,199.4 230.1,199.4 230.2,199.4 230.2,199.4 230.3,199.4 230.4,199.4 230.5,199.4 230.5,199.4 230.6,199.4 230.7,199.4 230.8,199.5 230.9,199.5 230.9,199.5 231.0,199.5 231.1,199.5 231.2,199.5 231.2,199.5 231.3,199.5 231.4,199.5 231.5,199.5 231.6,199.5 231.6,199.5 231.7,199.5 231.8,199.5 231.9,199.5 232.0,199.5 232.0,199.5 232.1,199.5 232.2,199.5 232.3,199.5 232.3,199.5 232.4,199.5 232.5,199.5 232.6,199.5 232.7,199.5 232.7,199.5 232.8,199.5 232.9,199.5 233.0,199.5 233.1,199.5 233.1,199.5 233.2,199.5 233.3,199.5 233.4,199.5 233.4,199.5 233.5,199.5 233.6,199.5 233.7,199.5 233.8,199.5 233.8,199.4 233.9,199.4 234.0,199.4 234.1,199.4 234.1,199.4 234.2,199.4 234.3,199.4 234.4,199.4 234.5,199.4 234.5,199.4 234.6,199.4 234.7,199.4 234.8,199.4 234.9,199.4 234.9,199.4 235.0,199.4 235.1,199.4 235.2,199.4 235.2,199.4 235.3,199.4 235.4,199.4 235.5,199.4 235.6,199.4 235.6,199.4 235.7,199.3 235.8,199.3 235.9,199.3 236.0,199.3 236.0,199.3 236.1,199.3 236.2,199.3 236.3,199.3 236.3,199.3 236.4,199.3 236.5,199.3 236.6,199.3 236.7,199.3 236.7,199.3 236.8,199.2 236.9,199.2 237.0,199.2 237.0,199.2 237.1,199.2 237.2,199.2 237.3,199.2 237.4,199.2 237.4,199.2 237.5,199.2 237.6,199.2 237.7,199.2 237.8,199.1 237.8,199.1 237.9,199.1 238.0,199.1 238.1,199.1 238.1,199.1 238.2,199.1 238.3,199.1 238.4,199.1 238.5,199.1 238.5,199.0 238.6,199.0 238.7,199.0 238.8,199.0 238.9,199.0 238.9,199.0 239.0,199.0 239.1,199.0 239.2,199.0 239.2,198.9 239.3,198.9 239.4,198.9 239.5,198.9 239.6,198.9 239.6,198.9 239.7,198.9 239.8,198.9 239.9,198.8 239.9,198.8 240.0,198.8 240.1,198.8 240.2,198.8 240.3,198.8 240.3,198.8 240.4,198.8 240.5,198.7 240.6,198.7 240.7,198.7 240.7,198.7 240.8,198.7 240.9,198.7 241.0,198.7 241.0,198.7 241.1,198.6 241.2,198.6 241.3,198.6 241.4,198.6 241.4,198.6 241.5,198.6 241.6,198.6 241.7,198.5 241.8,198.5 241.8,198.5 241.9,198.5 242.0,198.5 242.1,198.5 242.1,198.5 242.2,198.5 242.3,198.4 242.4,198.4 242.5,198.4 242.5,198.4 242.6,198.4 242.7,198.4 242.8,198.4 242.8,198.3 242.9,198.3 243.0,198.3 243.1,198.3 243.2,198.3 243.2,198.3 243.3,198.3 243.4,198.2 243.5,198.2 243.6,198.2 243.6,198.2 243.7,198.2 243.8,198.2 243.9,198.2 243.9,198.2 244.0,198.1 244.1,198.1 244.2,198.1 244.3,198.1 244.3,198.1 244.4,198.1 244.5,198.1 244.6,198.1 244.7,198.0 244.7,198.0 244.8,198.0 244.9,198.0 245.0,198.0 245.0,198.0 245.1,198.0 245.2,198.0 245.3,198.0 245.4,197.9 245.4,197.9 245.5,197.9 245.6,197.9 245.7,197.9 245.7,197.9 245.8,197.9 245.9,197.9 246.0,197.9 246.1,197.9 246.1,197.9 246.2,197.8 246.3,197.8 246.4,197.8 246.5,197.8 246.5,197.8 246.6,197.8 246.7,197.8 246.8,197.8 246.8,197.8 246.9,197.8 247.0,197.8 247.1,197.8 247.2,197.8 247.2,197.8 247.3,197.8 247.4,197.8 247.5,197.8 247.5,197.8 247.6,197.8 247.7,197.8 247.8,197.8 247.9,197.8 247.9,197.8 248.0,197.8 248.1,197.8 248.2,197.8 248.3,197.8 248.3,197.8 248.4,197.8 248.5,197.8 248.6,197.8 248.6,197.8 248.7,197.8 248.8,197.8 248.9,197.8 249.0,197.8 249.0,197.8 249.1,197.8 249.2,197.8 249.3,197.8 249.4,197.8 249.4,197.8 249.5,197.8 249.6,197.8 249.7,197.8 249.7,197.8 249.8,197.8 249.9,197.9 250.0,197.9 250.1,197.9 250.1,197.9 250.2,197.9 250.3,197.9 250.4,197.9 250.4,197.9 250.5,197.9 250.6,197.9 250.7,198.0 250.8,198.0 250.8,198.0 250.9,198.0 251.0,198.0 251.1,198.0 251.2,198.0 251.2,198.1 251.3,198.1 251.4,198.1 251.5,198.1 251.5,198.1 251.6,198.1 251.7,198.2 251.8,198.2 251.9,198.2 251.9,198.2 252.0,198.2 252.1,198.3 252.2,198.3 252.3,198.3 252.3,198.3 252.4,198.3 252.5,198.3 252.6,198.4 252.6,198.4 252.7,198.4 252.8,198.4 252.9,198.5 253.0,198.5 253.0,198.5 253.1,198.5 253.2,198.5 253.3,198.6 253.3,198.6 253.4,198.6 253.5,198.6 253.6,198.6 253.7,198.7 253.7,198.7 253.8,198.7 253.9,198.7 254.0,198.8 254.1,198.8 254.1,198.8 254.2,198.8 254.3,198.8 254.4,198.9 254.4,198.9 254.5,198.9 254.6,198.9 254.7,199.0 254.8,199.0 254.8,199.0 254.9,199.0 255.0,199.0 255.1,199.1 255.2,199.1 255.2,199.1 255.3,199.1 255.4,199.1 255.5,199.2 255.5,199.2 255.6,199.2 255.7,199.2 255.8,199.2 255.9,199.2 255.9,199.3 256.0,199.3 256.1,199.3 256.2,199.3 256.2,199.3 256.3,199.3 256.4,199.4 256.5,199.4 256.6,199.4 256.6,199.4 256.7,199.4 256.8,199.4 256.9,199.4 257.0,199.4 257.0,199.4 257.1,199.4 257.2,199.5 257.3,199.5 257.3,199.5 257.4,199.5 257.5,199.5 257.6,199.5 257.7,199.5 257.7,199.5 257.8,199.5 257.9,199.5 258.0,199.5 258.1,199.5 258.1,199.5 258.2,199.5 258.3,199.4 258.4,199.4 258.4,199.4 258.5,199.4 258.6,199.4 258.7,199.4 258.8,199.4 258.8,199.4 258.9,199.3 259.0,199.3 259.1,199.3 259.1,199.3 259.2,199.3 259.3,199.2 259.4,199.2 259.5,199.2 259.5,199.2 259.6,199.1 259.7,199.1 259.8,199.1 259.9,199.0 259.9,199.0 260.0,199.0 260.1,198.9 260.2,198.9 260.2,198.9 260.3,198.8 260.4,198.8 260.5,198.7 260.6,198.7 260.6,198.6 260.7,198.6 260.8,198.6 260.9,198.5 261.0,198.5 261.0,198.4 261.1,198.4 261.2,198.3 261.3,198.3 261.3,198.2 261.4,198.2 261.5,198.1 261.6,198.1 261.7,198.0 261.7,198.0 261.8,198.0 261.9,197.9 262.0,197.9 262.0,197.8 262.1,197.8 262.2,197.8 262.3,197.8 262.4,197.8 262.4,197.8 262.5,197.8 262.6,197.8 262.7,197.8 262.8,197.8 262.8,197.8 262.9,197.9 263.0,197.9 263.1,198.0 263.1,198.0 263.2,198.1 263.3,198.2 263.4,198.3 263.5,198.5 263.5,198.6 263.6,198.8 263.7,198.9 263.8,199.1 263.9,199.3 263.9,199.5 264.0,199.8 264.1,200.0 264.2,200.3 264.2,200.5 264.3,200.8 264.4,201.1 264.5,201.5 264.6,201.8 264.6,202.1 264.7,202.5 264.8,202.8 264.9,203.2 264.9,203.6 265.0,204.0 265.1,204.4 265.2,204.8 265.3,205.2 265.3,205.6 265.4,206.1 265.5,206.5 265.6,206.9 265.7,207.4 265.7,207.8 265.8,208.2 265.9,208.7 266.0,209.2 266.0,209.6 266.1,210.1 266.2,210.5 266.3,211.0 266.4,211.4 266.4,211.9 266.5,212.4 266.6,212.8 266.7,213.3 266.8,213.7 266.8,214.2 266.9,214.7 267.0,215.1 267.1,215.6 267.1,216.1 267.2,216.5 267.3,217.0 267.4,217.4 267.5,217.9 267.5,218.4 267.6,218.8 267.7,219.3 267.8,219.7 267.8,220.2 267.9,220.6 268.0,221.1 268.1,221.6 268.2,222.0 268.2,222.5 268.3,222.9 268.4,223.4 268.5,223.8 268.6,224.3 268.6,224.7 268.7,225.2 268.8,225.6 268.9,226.1 268.9,226.5 269.0,227.0 269.1,227.4 269.2,227.9 269.3,228.3 269.3,228.8 269.4,229.2 269.5,229.7 269.6,230.1 269.6,230.6 269.7,231.0 269.8,231.5 269.9,232.0 270.0,232.4 270.0,232.9 270.1,233.3 270.2,233.8 270.3,234.2 270.4,234.7 270.4,235.1 270.5,235.6 270.6,236.1 270.7,236.5 270.7,237.0 270.8,237.5 270.9,237.9 271.0,238.4 271.1,238.9 271.1,239.3 271.2,239.8 271.3,240.3 271.4,240.8 271.5,241.3 271.5,241.8 271.6,242.2 271.7,242.7 271.8,243.2 271.8,243.7 271.9,244.2 272.0,244.7 272.1,245.2 272.2,245.7 272.2,246.3 272.3,246.8 272.4,247.3 272.5,247.8 272.5,248.4 272.6,248.9 272.7,249.5 272.8,250.0 272.9,250.6 272.9,251.1 273.0,251.7 273.1,252.3 273.2,252.9 273.3,253.4 273.3,254.0 273.4,254.7 273.5,255.3 273.6,255.9 273.6,256.5 273.7,257.2 273.8,257.9 273.9,258.5 274.0,259.2 274.0,259.9 274.1,260.6 274.2,261.4 274.3,262.1 274.4,262.9 274.4,263.7 274.5,264.5 274.6,265.4 274.7,266.2 274.7,267.1 274.8,268.1 274.9,269.0 275.0,270.0 275.1,271.1 275.1,272.2 275.2,273.3 275.3,274.6 275.4,275.9 275.4,277.2 275.5,278.7 275.6,280.3 275.7,282.0 275.8,283.9 275.8,286.1 275.9,288.5 276.0,291.3 276.1,294.6 276.2,298.7 276.2,304.3 276.3,313.0 276.4,334.8 276.5,323.1 276.5,309.8 276.6,303.1 276.7,298.5 276.8,295.1 276.9,292.4 276.9,290.2 277.0,288.3 277.1,286.7 277.2,285.2 277.3,284.0 277.3,282.8 277.4,281.8 277.5,280.8 277.6,280.0 277.6,279.2 277.7,278.5 277.8,277.8 277.9,277.1 278.0,276.6 278.0,276.0 278.1,275.5 278.2,275.0 278.3,274.6 278.3,274.1 278.4,273.7 278.5,273.3 278.6,273.0 278.7,272.6 278.7,272.3 278.8,272.0 278.9,271.7 279.0,271.4 279.1,271.2 279.1,270.9 279.2,270.7 279.3,270.5 279.4,270.2 279.4,270.0 279.5,269.8 279.6,269.7 279.7,269.5 279.8,269.3 279.8,269.1 279.9,269.0 280.0,268.9 280.1,268.7 280.2,268.6 280.2,268.5 280.3,268.3 280.4,268.2 280.5,268.1 280.5,268.0 280.6,267.9 280.7,267.8 280.8,267.7 280.9,267.7 280.9,267.6 281.0,267.5 281.1,267.4 281.2,267.4 281.2,267.3 281.3,267.2 281.4,267.2 281.5,267.1 281.6,267.1 281.6,267.1 281.7,267.0 281.8,267.0 281.9,266.9 282.0,266.9 282.0,266.9 282.1,266.9 282.2,266.8 282.3,266.8 282.3,266.8 282.4,266.8 282.5,266.8 282.6,266.8 282.7,266.8 282.7,266.8 282.8,266.8 282.9,266.8 283.0,266.8 283.1,266.8 283.1,266.8 283.2,266.8 283.3,266.8 283.4,266.8 283.4,266.8 283.5,266.8 283.6,266.8 283.7,266.9 283.8,266.9 283.8,266.9 283.9,266.9 284.0,267.0 284.1,267.0 284.1,267.0 284.2,267.0 284.3,267.1 284.4,267.1 284.5,267.2 284.5,267.2 284.6,267.2 284.7,267.3 284.8,267.3 284.9,267.4 284.9,267.4 285.0,267.5 285.1,267.5 285.2,267.5 285.2,267.6 285.3,267.7 285.4,267.7 285.5,267.8 285.6,267.8 285.6,267.9 285.7,267.9 285.8,268.0 285.9,268.1 286.0,268.1 286.0,268.2 286.1,268.2 286.2,268.3 286.3,268.4 286.3,268.4 286.4,268.5 286.5,268.6 286.6,268.7 286.7,268.7 286.7,268.8 286.8,268.9 286.9,269.0 287.0,269.0 287.0,269.1 287.1,269.2 287.2,269.3 287.3,269.4 287.4,269.4 287.4,269.5 287.5,269.6 287.6,269.7 287.7,269.8 287.8,269.9 287.8,270.0 287.9,270.0 288.0,270.1 288.1,270.2 288.1,270.3 288.2,270.4 288.3,270.5 288.4,270.6 288.5,270.7 288.5,270.8 288.6,270.9 288.7,271.0 288.8,271.1 288.9,271.2 288.9,271.3 289.0,271.4 289.1,271.5 289.2,271.7 289.2,271.8 289.3,271.9 289.4,272.0 289.5,272.1 289.6,272.2 289.6,272.3 289.7,272.4 289.8,272.6 289.9,272.7 289.9,272.8 290.0,272.9 290.1,273.0 290.2,273.2 290.3,273.3 290.3,273.4 290.4,273.6 290.5,273.7 290.6,273.8 290.7,273.9 290.7,274.1 290.8,274.2 290.9,274.3 291.0,274.5 291.0,274.6 291.1,274.8 291.2,274.9 291.3,275.0 291.4,275.2 291.4,275.3 291.5,275.5 291.6,275.6 291.7,275.8 291.8,275.9 291.8,276.1 291.9,276.2 292.0,276.4 292.1,276.6 292.1,276.7 292.2,276.9 292.3,277.0 292.4,277.2 292.5,277.4 292.5,277.5 292.6,277.7 292.7,277.9 292.8,278.0 292.8,278.2 292.9,278.4 293.0,278.6 293.1,278.8 293.2,278.9 293.2,279.1 293.3,279.3 293.4,279.5 293.5,279.7 293.6,279.9 293.6,280.1 293.7,280.3 293.8,280.5 293.9,280.7 293.9,280.9 294.0,281.1 294.1,281.3 294.2,281.5 294.3,281.8 294.3,282.0 294.4,282.2 294.5,282.4 294.6,282.7 294.6,282.9 294.7,283.1 294.8,283.4 294.9,283.6 295.0,283.9 295.0,284.1 295.1,284.4 295.2,284.6 295.3,284.9 295.4,285.1 295.4,285.4 295.5,285.7 295.6,286.0 295.7,286.3 295.7,286.5 295.8,286.8 295.9,287.1 296.0,287.4 296.1,287.8 296.1,288.1 296.2,288.4 296.3,288.7 296.4,289.1 296.5,289.4 296.5,289.7 296.6,290.1 296.7,290.5 296.8,290.8 296.8,291.2 296.9,291.6 297.0,292.0 297.1,292.4 297.2,292.8 297.2,293.3 297.3,293.7 297.4,294.2 297.5,294.6 297.5,295.1 297.6,295.6 297.7,296.1 297.8,296.7 297.9,297.2 297.9,297.8 298.0,298.4 298.1,299.0 298.2,299.6 298.3,300.3 298.3,301.0 298.4,301.7 298.5,302.4 298.6,303.2 298.6,304.1 298.7,305.0 298.8,305.9 298.9,306.9 299.0,307.9 299.0,309.1 299.1,310.3 299.2,311.6 299.3,313.1 299.4,314.7 299.4,316.5 299.5,318.6 299.6,320.9 299.7,323.7 299.7,327.1 299.8,331.5 299.9,337.8 300.0,348.7 300.1,388.6 300.1,346.8 300.2,336.9 300.3,331.0 300.4,326.8 300.4,323.5 300.5,320.9 300.6,318.6 300.7,316.6 300.8,314.9 300.8,313.4 300.9,312.0 301.0,310.7 301.1,309.5 301.2,308.4 301.2,307.4 301.3,306.5 301.4,305.6 301.5,304.8 301.5,304.0 301.6,303.3 301.7,302.6 301.8,301.9 301.9,301.2 301.9,300.6 302.0,300.0 302.1,299.5 302.2,298.9 302.3,298.4 302.3,297.9 302.4,297.4 302.5,297.0 302.6,296.5 302.6,296.1 302.7,295.7 302.8,295.3 302.9,294.9 303.0,294.5 303.0,294.1 303.1,293.7 303.2,293.4 303.3,293.0 303.3,292.7 303.4,292.4 303.5,292.1 303.6,291.7 303.7,291.4 303.7,291.1 303.8,290.8 303.9,290.6 304.0,290.3 304.1,290.0 304.1,289.7 304.2,289.5 304.3,289.2 304.4,289.0 304.4,288.7 304.5,288.5 304.6,288.3 304.7,288.0 304.8,287.8 304.8,287.6 304.9,287.4 305.0,287.2 305.1,286.9 305.2,286.7 305.2,286.5 305.3,286.3 305.4,286.1 305.5,285.9 305.5,285.7 305.6,285.6 305.7,285.4 305.8,285.2 305.9,285.0 305.9,284.8 306.0,284.7 306.1,284.5 306.2,284.3 306.2,284.2 306.3,284.0 306.4,283.8 306.5,283.7 306.6,283.5 306.6,283.4 306.7,283.2 306.8,283.1 306.9,282.9 307.0,282.8 307.0,282.6 307.1,282.5 307.2,282.4 307.3,282.2 307.3,282.1 307.4,281.9 307.5,281.8 307.6,281.7 307.7,281.6 307.7,281.4 307.8,281.3 307.9,281.2 308.0,281.0 308.1,280.9 308.1,280.8 308.2,280.7 308.3,280.6 308.4,280.5 308.4,280.3 308.5,280.2 308.6,280.1 308.7,280.0 308.8,279.9 308.8,279.8 308.9,279.7 309.0,279.6 309.1,279.5 309.1,279.4 309.2,279.3 309.3,279.2 309.4,279.1 309.5,279.0 309.5,278.9 309.6,278.8 309.7,278.7 309.8,278.6 309.9,278.5 309.9,278.4 310.0,278.3 310.1,278.2 310.2,278.1 310.2,278.0 310.3,277.9 310.4,277.8 310.5,277.8 310.6,277.7 310.6,277.6 310.7,277.5 310.8,277.4 310.9,277.3 311.0,277.2 311.0,277.2 311.1,277.1 311.2,277.0 311.3,276.9 311.3,276.8 311.4,276.8 311.5,276.7 311.6,276.6 311.7,276.5 311.7,276.5 311.8,276.4 311.9,276.3 312.0,276.2 312.0,276.2 312.1,276.1 312.2,276.0 312.3,276.0 312.4,275.9 312.4,275.8 312.5,275.8 312.6,275.7 312.7,275.6 312.8,275.6 312.8,275.5 312.9,275.4 313.0,275.4 313.1,275.3 313.1,275.2 313.2,275.2 313.3,275.1 313.4,275.0 313.5,275.0 313.5,274.9 313.6,274.9 313.7,274.8 313.8,274.7 313.9,274.7 313.9,274.6 314.0,274.6 314.1,274.5 314.2,274.4 314.2,274.4 314.3,274.3 314.4,274.3 314.5,274.2 314.6,274.2 314.6,274.1 314.7,274.1 314.8,274.0 314.9,273.9 314.9,273.9 315.0,273.8 315.1,273.8 315.2,273.7 315.3,273.7 315.3,273.6 315.4,273.6 315.5,273.5 315.6,273.5 315.7,273.4 315.7,273.4 315.8,273.3 315.9,273.3 316.0,273.2 316.0,273.2 316.1,273.1 316.2,273.1 316.3,273.1 316.4,273.0 316.4,273.0 316.5,272.9 316.6,272.9 316.7,272.8 316.7,272.8 316.8,272.7 316.9,272.7 317.0,272.6 317.1,272.6 317.1,272.6 317.2,272.5 317.3,272.5 317.4,272.4 317.5,272.4 317.5,272.4 317.6,272.3 317.7,272.3 317.8,272.2 317.8,272.2 317.9,272.2 318.0,272.1 318.1,272.1 318.2,272.0 318.2,272.0 318.3,272.0 318.4,271.9 318.5,271.9 318.6,271.8 318.6,271.8 318.7,271.8 318.8,271.7 318.9,271.7 318.9,271.7 319.0,271.6 319.1,271.6 319.2,271.5 319.3,271.5 319.3,271.5 319.4,271.4 319.5,271.4 319.6,271.4 319.6,271.3 319.7,271.3 319.8,271.3 319.9,271.2 320.0,271.2 320.0,271.2 320.1,271.1 320.2,271.1 320.3,271.1 320.4,271.0 320.4,271.0 320.5,271.0 320.6,270.9 320.7,270.9 320.7,270.9 320.8,270.9 320.9,270.8 321.0,270.8 321.1,270.8 321.1,270.7 321.2,270.7 321.3,270.7 321.4,270.6 321.5,270.6 321.5,270.6 321.6,270.6 321.7,270.5 321.8,270.5 321.8,270.5 321.9,270.4 322.0,270.4 322.1,270.4 322.2,270.4 322.2,270.3 322.3,270.3 322.4,270.3 322.5,270.3 322.5,270.2 322.6,270.2 322.7,270.2 322.8,270.1 322.9,270.1 322.9,270.1 323.0,270.1 323.1,270.0 323.2,270.0 323.3,270.0 323.3,270.0 323.4,269.9 323.5,269.9 323.6,269.9 323.6,269.9 323.7,269.8 323.8,269.8 323.9,269.8 324.0,269.8 324.0,269.7 324.1,269.7 324.2,269.7 324.3,269.7 324.4,269.7 324.4,269.6 324.5,269.6 324.6,269.6 324.7,269.6 324.7,269.5 324.8,269.5 324.9,269.5 325.0,269.5 325.1,269.5 325.1,269.4 325.2,269.4 325.3,269.4 325.4,269.4 325.4,269.3 325.5,269.3 325.6,269.3 325.7,269.3 325.8,269.3 325.8,269.2 325.9,269.2 326.0,269.2 326.1,269.2 326.2,269.2 326.2,269.1 326.3,269.1 326.4,269.1 326.5,269.1 326.5,269.1 326.6,269.1 326.7,269.0 326.8,269.0 326.9,269.0 326.9,269.0 327.0,269.0 327.1,268.9 327.2,268.9 327.3,268.9 327.3,268.9 327.4,268.9 327.5,268.8 327.6,268.8 327.6,268.8 327.7,268.8 327.8,268.8 327.9,268.8 328.0,268.7 328.0,268.7 328.1,268.7 328.2,268.7 328.3,268.7 328.3,268.7 328.4,268.6 328.5,268.6 328.6,268.6 328.7,268.6 328.7,268.6 328.8,268.6 328.9,268.5 329.0,268.5 329.1,268.5 329.1,268.5 329.2,268.5 329.3,268.5 329.4,268.5 329.4,268.4 329.5,268.4 329.6,268.4 329.7,268.4 329.8,268.4 329.8,268.4 329.9,268.4 330.0,268.3 330.1,268.3 330.2,268.3 330.2,268.3 330.3,268.3 330.4,268.3 330.5,268.3 330.5,268.2 330.6,268.2 330.7,268.2 330.8,268.2 330.9,268.2 330.9,268.2 331.0,268.2 331.1,268.1 331.2,268.1 331.2,268.1 331.3,268.1 331.4,268.1 331.5,268.1 331.6,268.1 331.6,268.1 331.7,268.0 331.8,268.0 331.9,268.0 332.0,268.0 332.0,268.0 332.1,268.0 332.2,268.0 332.3,268.0 332.3,267.9 332.4,267.9 332.5,267.9 332.6,267.9 332.7,267.9 332.7,267.9 332.8,267.9 332.9,267.9 333.0,267.9 333.1,267.8 333.1,267.8 333.2,267.8 333.3,267.8 333.4,267.8 333.4,267.8 333.5,267.8 333.6,267.8 333.7,267.8 333.8,267.8 333.8,267.7 333.9,267.7 334.0,267.7 334.1,267.7 334.1,267.7 334.2,267.7 334.3,267.7 334.4,267.7 334.5,267.7 334.5,267.7 334.6,267.6 334.7,267.6 334.8,267.6 334.9,267.6 334.9,267.6 335.0,267.6 335.1,267.6 335.2,267.6 335.2,267.6 335.3,267.6 335.4,267.5 335.5,267.5 335.6,267.5 335.6,267.5 335.7,267.5 335.8,267.5 335.9,267.5 336.0,267.5 336.0,267.5 336.1,267.5 336.2,267.5 336.3,267.5 336.3,267.4 336.4,267.4 336.5,267.4 336.6,267.4 336.7,267.4 336.7,267.4 336.8,267.4 336.9,267.4 337.0,267.4 337.0,267.4 337.1,267.4 337.2,267.4 337.3,267.4 337.4,267.3 337.4,267.3 337.5,267.3 337.6,267.3 337.7,267.3 337.8,267.3 337.8,267.3 337.9,267.3 338.0,267.3 338.1,267.3 338.1,267.3 338.2,267.3 338.3,267.3 338.4,267.3 338.5,267.2 338.5,267.2 338.6,267.2 338.7,267.2 338.8,267.2 338.8,267.2 338.9,267.2 339.0,267.2 339.1,267.2 339.2,267.2 339.2,267.2 339.3,267.2 339.4,267.2 339.5,267.2 339.6,267.2 339.6,267.2 339.7,267.2 339.8,267.1 339.9,267.1 339.9,267.1 340.0,267.1 340.1,267.1 340.2,267.1 340.3,267.1 340.3,267.1 340.4,267.1 340.5,267.1 340.6,267.1 340.7,267.1 340.7,267.1 340.8,267.1 340.9,267.1 341.0,267.1 341.0,267.1 341.1,267.1 341.2,267.1 341.3,267.0 341.4,267.0 341.4,267.0 341.5,267.0 341.6,267.0 341.7,267.0 341.7,267.0 341.8,267.0 341.9,267.0 342.0,267.0 342.1,267.0 342.1,267.0 342.2,267.0 342.3,267.0 342.4,267.0 342.5,267.0 342.5,267.0 342.6,267.0 342.7,267.0 342.8,267.0 342.8,267.0 342.9,267.0 343.0,267.0 343.1,266.9 343.2,266.9 343.2,266.9 343.3,266.9 343.4,266.9 343.5,266.9 343.6,266.9 343.6,266.9 343.7,266.9 343.8,266.9 343.9,266.9 343.9,266.9 344.0,266.9 344.1,266.9 344.2,266.9 344.3,266.9 344.3,266.9 344.4,266.9 344.5,266.9 344.6,266.9 344.6,266.9 344.7,266.9 344.8,266.9 344.9,266.9 345.0,266.9 345.0,266.9 345.1,266.9 345.2,266.9 345.3,266.9 345.4,266.9 345.4,266.9 345.5,266.8 345.6,266.8 345.7,266.8 345.7,266.8 345.8,266.8 345.9,266.8 346.0,266.8 346.1,266.8 346.1,266.8 346.2,266.8 346.3,266.8 346.4,266.8 346.5,266.8 346.5,266.8 346.6,266.8 346.7,266.8 346.8,266.8 346.8,266.8 346.9,266.8 347.0,266.8 347.1,266.8 347.2,266.8 347.2,266.8 347.3,266.8 347.4,266.8 347.5,266.8 347.5,266.8 347.6,266.8 347.7,266.8 347.8,266.8 347.9,266.8 347.9,266.8 348.0,266.8 348.1,266.8 348.2,266.8 348.3,266.8 348.3,266.8 348.4,266.8 348.5,266.8 348.6,266.8 348.6,266.8 348.7,266.8 348.8,266.8 348.9,266.8 349.0,266.8 349.0,266.8 349.1,266.8 349.2,266.8 349.3,266.8 349.4,266.8 349.4,266.8 349.5,266.8 349.6,266.8 349.7,266.8 349.7,266.8 349.8,266.8 349.9,266.8 350.0,266.8 350.1,266.8 350.1,266.8 350.2,266.8 350.3,266.8 350.4,266.8 350.4,266.8 350.5,266.8 350.6,266.8 350.7,266.8 350.8,266.8 350.8,266.8 350.9,266.8 351.0,266.8 351.1,266.8 351.2,266.8 351.2,266.8 351.3,266.8 351.4,266.8 351.5,266.8 351.5,266.8 351.6,266.8 351.7,266.8 351.8,266.8 351.9,266.8 351.9,266.8 352.0,266.8 352.1,266.8 352.2,266.8 352.3,266.8 352.3,266.8 352.4,266.8 352.5,266.8 352.6,266.8 352.6,266.8 352.7,266.8 352.8,266.8 352.9,266.8 353.0,266.8 353.0,266.8 353.1,266.8 353.2,266.8 353.3,266.8 353.3,266.8 353.4,266.8 353.5,266.8 353.6,266.8 353.7,266.8 353.7,266.8 353.8,266.8 353.9,266.8 354.0,266.8 354.1,266.8 354.1,266.8 354.2,266.8 354.3,266.8 354.4,266.8 354.4,266.8 354.5,266.8 354.6,266.8 354.7,266.8 354.8,266.8 354.8,266.8 354.9,266.8 355.0,266.8 355.1,266.8 355.2,266.8 355.2,266.8 355.3,266.8 355.4,266.8 355.5,266.8 355.5,266.8 355.6,266.8 355.7,266.8 355.8,266.8 355.9,266.8 355.9,266.8 356.0,266.8 356.1,266.8 356.2,266.8 356.2,266.8 356.3,266.8 356.4,266.8 356.5,266.8 356.6,266.8 356.6,266.8 356.7,266.8 356.8,266.8 356.9,266.8 357.0,266.8 357.0,266.8 357.1,266.8 357.2,266.8 357.3,266.8 357.3,266.8 357.4,266.8 357.5,266.8 357.6,266.8 357.7,266.8 357.7,266.8 357.8,266.8 357.9,266.8 358.0,266.8 358.1,266.8 358.1,266.8 358.2,266.8 358.3,266.8 358.4,266.8 358.4,266.8 358.5,266.8 358.6,266.8 358.7,266.8 358.8,266.8 358.8,266.8 358.9,266.8 359.0,266.9 359.1,266.9 359.1,266.9 359.2,266.9 359.3,266.9 359.4,266.9 359.5,266.9 359.5,266.9 359.6,266.9 359.7,266.9 359.8,266.9 359.9,266.9 359.9,266.9 360.0,266.9 360.1,266.9 360.2,266.9 360.2,266.9 360.3,266.9 360.4,266.9 360.5,266.9 360.6,266.9 360.6,266.9 360.7,266.9 360.8,266.9 360.9,266.9 360.9,266.9 361.0,266.9 361.1,266.9 361.2,266.9 361.3,266.9 361.3,266.9 361.4,266.9 361.5,266.9 361.6,266.9 361.7,266.9 361.7,266.9 361.8,266.9 361.9,266.9 362.0,266.9 362.0,266.9 362.1,267.0 362.2,267.0 362.3,267.0 362.4,267.0 362.4,267.0 362.5,267.0 362.6,267.0 362.7,267.0 362.8,267.0 362.8,267.0 362.9,267.0 363.0,267.0 363.1,267.0 363.1,267.0 363.2,267.0 363.3,267.0 363.4,267.0 363.5,267.0 363.5,267.0 363.6,267.0 363.7,267.0 363.8,267.0 363.8,267.0 363.9,267.0 364.0,267.0 364.1,267.0 364.2,267.0 364.2,267.0 364.3,267.0 364.4,267.0 364.5,267.0 364.6,267.0 364.6,267.1 364.7,267.1 364.8,267.1 364.9,267.1 364.9,267.1 365.0,267.1 365.1,267.1 365.2,267.1 365.3,267.1 365.3,267.1 365.4,267.1 365.5,267.1 365.6,267.1 365.7,267.1 365.7,267.1 365.8,267.1 365.9,267.1 366.0,267.1 366.0,267.1 366.1,267.1 366.2,267.1 366.3,267.1 366.4,267.1 366.4,267.1 366.5,267.1 366.6,267.1 366.7,267.1 366.7,267.2 366.8,267.2 366.9,267.2 367.0,267.2 367.1,267.2 367.1,267.2 367.2,267.2 367.3,267.2 367.4,267.2 367.5,267.2 367.5,267.2 367.6,267.2 367.7,267.2 367.8,267.2 367.8,267.2 367.9,267.2 368.0,267.2 368.1,267.2 368.2,267.2 368.2,267.2 368.3,267.2 368.4,267.2 368.5,267.2 368.6,267.2 368.6,267.2 368.7,267.3 368.8,267.3 368.9,267.3 368.9,267.3 369.0,267.3 369.1,267.3 369.2,267.3 369.3,267.3 369.3,267.3 369.4,267.3 369.5,267.3 369.6,267.3 369.6,267.3 369.7,267.3 369.8,267.3 369.9,267.3 370.0,267.3 370.0,267.3 370.1,267.3 370.2,267.3 370.3,267.3 370.4,267.3 370.4,267.4 370.5,267.4 370.6,267.4 370.7,267.4 370.7,267.4 370.8,267.4 370.9,267.4 371.0,267.4 371.1,267.4 371.1,267.4 371.2,267.4 371.3,267.4 371.4,267.4 371.5,267.4 371.5,267.4 371.6,267.4 371.7,267.4 371.8,267.4 371.8,267.4 371.9,267.4 372.0,267.4 372.1,267.4 372.2,267.5 372.2,267.5 372.3,267.5 372.4,267.5 372.5,267.5 372.5,267.5 372.6,267.5 372.7,267.5 372.8,267.5 372.9,267.5 372.9,267.5 373.0,267.5 373.1,267.5 373.2,267.5 373.3,267.5 373.3,267.5 373.4,267.5 373.5,267.5 373.6,267.5 373.6,267.5 373.7,267.6 373.8,267.6 373.9,267.6 374.0,267.6 374.0,267.6 374.1,267.6 374.2,267.6 374.3,267.6 374.4,267.6 374.4,267.6 374.5,267.6 374.6,267.6 374.7,267.6 374.7,267.6 374.8,267.6 374.9,267.6 375.0,267.6 375.1,267.6 375.1,267.6 375.2,267.7 375.3,267.7 375.4,267.7 375.4,267.7 375.5,267.7 375.6,267.7 375.7,267.7 375.8,267.7 375.8,267.7 375.9,267.7 376.0,267.7 376.1,267.7 376.2,267.7 376.2,267.7 376.3,267.7 376.4,267.7 376.5,267.7 376.5,267.7 376.6,267.8 376.7,267.8 376.8,267.8 376.9,267.8 376.9,267.8 377.0,267.8 377.1,267.8 377.2,267.8 377.3,267.8 377.3,267.8 377.4,267.8 377.5,267.8 377.6,267.8 377.6,267.8 377.7,267.8 377.8,267.8 377.9,267.8 378.0,267.8 378.0,267.9 378.1,267.9 378.2,267.9 378.3,267.9 378.3,267.9 378.4,267.9 378.5,267.9 378.6,267.9 378.7,267.9 378.7,267.9 378.8,267.9 378.9,267.9 379.0,267.9 379.1,267.9 379.1,267.9 379.2,267.9 379.3,267.9 379.4,268.0 379.4,268.0 379.5,268.0 379.6,268.0 379.7,268.0 379.8,268.0 379.8,268.0 379.9,268.0 380.0,268.0 380.1,268.0 380.2,268.0 380.2,268.0 380.3,268.0 380.4,268.0 380.5,268.0 380.5,268.0 380.6,268.0 380.7,268.1 380.8,268.1 380.9,268.1 380.9,268.1 381.0,268.1 381.1,268.1 381.2,268.1 381.2,268.1 381.3,268.1 381.4,268.1 381.5,268.1 381.6,268.1 381.6,268.1 381.7,268.1 381.8,268.1 381.9,268.1 382.0,268.2 382.0,268.2 382.1,268.2 382.2,268.2 382.3,268.2 382.3,268.2 382.4,268.2 382.5,268.2 382.6,268.2 382.7,268.2 382.7,268.2 382.8,268.2 382.9,268.2 383.0,268.2 383.1,268.2 383.1,268.2 383.2,268.3 383.3,268.3 383.4,268.3 383.4,268.3 383.5,268.3 383.6,268.3 383.7,268.3 383.8,268.3 383.8,268.3 383.9,268.3 384.0,268.3 384.1,268.3 384.1,268.3 384.2,268.3 384.3,268.3 384.4,268.4 384.5,268.4 384.5,268.4 384.6,268.4 384.7,268.4 384.8,268.4 384.9,268.4 384.9,268.4 385.0,268.4 385.1,268.4 385.2,268.4 385.2,268.4 385.3,268.4 385.4,268.4 385.5,268.4 385.6,268.5 385.6,268.5 385.7,268.5 385.8,268.5 385.9,268.5 385.9,268.5 386.0,268.5 386.1,268.5 386.2,268.5 386.3,268.5 386.3,268.5 386.4,268.5 386.5,268.5 386.6,268.5 386.7,268.6 386.7,268.6 386.8,268.6 386.9,268.6 387.0,268.6 387.0,268.6 387.1,268.6 387.2,268.6 387.3,268.6 387.4,268.6 387.4,268.6 387.5,268.6 387.6,268.6 387.7,268.6 387.8,268.6 387.8,268.7 387.9,268.7 388.0,268.7 388.1,268.7 388.1,268.7 388.2,268.7 388.3,268.7 388.4,268.7 388.5,268.7 388.5,268.7 388.6,268.7 388.7,268.7 388.8,268.7 388.8,268.7 388.9,268.8 389.0,268.8 389.1,268.8 389.2,268.8 389.2,268.8 389.3,268.8 389.4,268.8 389.5,268.8 389.6,268.8 389.6,268.8 389.7,268.8 389.8,268.8 389.9,268.8 389.9,268.8 390.0,268.9 390.1,268.9 390.2,268.9 390.3,268.9 390.3,268.9 390.4,268.9 390.5,268.9 390.6,268.9 390.7,268.9 390.7,268.9 390.8,268.9 390.9,268.9 391.0,268.9 391.0,269.0 391.1,269.0 391.2,269.0 391.3,269.0 391.4,269.0 391.4,269.0 391.5,269.0 391.6,269.0 391.7,269.0 391.7,269.0 391.8,269.0 391.9,269.0 392.0,269.0 392.1,269.0 392.1,269.1 392.2,269.1 392.3,269.1 392.4,269.1 392.5,269.1 392.5,269.1 392.6,269.1 392.7,269.1 392.8,269.1 392.8,269.1 392.9,269.1 393.0,269.1 393.1,269.1 393.2,269.2 393.2,269.2 393.3,269.2 393.4,269.2 393.5,269.2 393.6,269.2 393.6,269.2 393.7,269.2 393.8,269.2 393.9,269.2 393.9,269.2 394.0,269.2 394.1,269.2 394.2,269.3 394.3,269.3 394.3,269.3 394.4,269.3 394.5,269.3 394.6,269.3 394.6,269.3 394.7,269.3 394.8,269.3 394.9,269.3 395.0,269.3 395.0,269.3 395.1,269.3 395.2,269.4 395.3,269.4 395.4,269.4 395.4,269.4 395.5,269.4 395.6,269.4 395.7,269.4 395.7,269.4 395.8,269.4 395.9,269.4 396.0,269.4 396.1,269.4 396.1,269.5 396.2,269.5 396.3,269.5 396.4,269.5 396.5,269.5 396.5,269.5 396.6,269.5 396.7,269.5 396.8,269.5 396.8,269.5 396.9,269.5 397.0,269.5 397.1,269.5 397.2,269.6 397.2,269.6 397.3,269.6 397.4,269.6 397.5,269.6 397.5,269.6 397.6,269.6 397.7,269.6 397.8,269.6 397.9,269.6 397.9,269.6 398.0,269.6 398.1,269.7 398.2,269.7 398.3,269.7 398.3,269.7 398.4,269.7 398.5,269.7 398.6,269.7 398.6,269.7 398.7,269.7 398.8,269.7 398.9,269.7 399.0,269.7 399.0,269.8 399.1,269.8 399.2,269.8 399.3,269.8 399.4,269.8 399.4,269.8 399.5,269.8 399.6,269.8 399.7,269.8 399.7,269.8 399.8,269.8 399.9,269.8 400.0,269.9 400.1,269.9 400.1,269.9 400.2,269.9 400.3,269.9 400.4,269.9 400.4,269.9 400.5,269.9 400.6,269.9 400.7,269.9 400.8,269.9 400.8,269.9 400.9,270.0 401.0,270.0 401.1,270.0 401.2,270.0 401.2,270.0 401.3,270.0 401.4,270.0 401.5,270.0 401.5,270.0 401.6,270.0 401.7,270.0 401.8,270.0 401.9,270.1 401.9,270.1 402.0,270.1 402.1,270.1 402.2,270.1 402.3,270.1 402.3,270.1 402.4,270.1 402.5,270.1 402.6,270.1 402.6,270.1 402.7,270.2 402.8,270.2 402.9,270.2 403.0,270.2 403.0,270.2 403.1,270.2 403.2,270.2 403.3,270.2 403.3,270.2 403.4,270.2 403.5,270.2 403.6,270.2 403.7,270.3 403.7,270.3 403.8,270.3 403.9,270.3 404.0,270.3 404.1,270.3 404.1,270.3 404.2,270.3 404.3,270.3 404.4,270.3 404.4,270.3 404.5,270.4 404.6,270.4 404.7,270.4 404.8,270.4 404.8,270.4 404.9,270.4 405.0,270.4 405.1,270.4 405.2,270.4 405.2,270.4 405.3,270.4 405.4,270.5 405.5,270.5 405.5,270.5 405.6,270.5 405.7,270.5 405.8,270.5 405.9,270.5 405.9,270.5 406.0,270.5 406.1,270.5 406.2,270.5 406.2,270.6 406.3,270.6 406.4,270.6 406.5,270.6 406.6,270.6 406.6,270.6 406.7,270.6 406.8,270.6 406.9,270.6 407.0,270.6 407.0,270.6 407.1,270.7 407.2,270.7 407.3,270.7 407.3,270.7 407.4,270.7 407.5,270.7 407.6,270.7 407.7,270.7 407.7,270.7 407.8,270.7 407.9,270.7 408.0,270.8 408.0,270.8 408.1,270.8 408.2,270.8 408.3,270.8 408.4,270.8 408.4,270.8 408.5,270.8 408.6,270.8 408.7,270.8 408.8,270.8 408.8,270.9 408.9,270.9 409.0,270.9 409.1,270.9 409.1,270.9 409.2,270.9 409.3,270.9 409.4,270.9 409.5,270.9 409.5,270.9 409.6,270.9 409.7,271.0 409.8,271.0 409.9,271.0 409.9,271.0 410.0,271.0 410.1,271.0 410.2,271.0 410.2,271.0 410.3,271.0 410.4,271.0 410.5,271.1 410.6,271.1 410.6,271.1 410.7,271.1 410.8,271.1 410.9,271.1 410.9,271.1 411.0,271.1 411.1,271.1 411.2,271.1 411.3,271.1 411.3,271.2 411.4,271.2 411.5,271.2 411.6,271.2 411.7,271.2 411.7,271.2 411.8,271.2 411.9,271.2 412.0,271.2 412.0,271.2 412.1,271.3 412.2,271.3 412.3,271.3 412.4,271.3 412.4,271.3 412.5,271.3 412.6,271.3 412.7,271.3 412.8,271.3 412.8,271.3 412.9,271.3 413.0,271.4 413.1,271.4 413.1,271.4 413.2,271.4 413.3,271.4 413.4,271.4 413.5,271.4 413.5,271.4 413.6,271.4 413.7,271.4 413.8,271.5 413.8,271.5 413.9,271.5 414.0,271.5 414.1,271.5 414.2,271.5 414.2,271.5 414.3,271.5 414.4,271.5 414.5,271.5 414.6,271.6 414.6,271.6 414.7,271.6 414.8,271.6 414.9,271.6 414.9,271.6 415.0,271.6 415.1,271.6 415.2,271.6 415.3,271.6 415.3,271.7 415.4,271.7 415.5,271.7 415.6,271.7 415.7,271.7 415.7,271.7 415.8,271.7 415.9,271.7 416.0,271.7 416.0,271.7 416.1,271.8 416.2,271.8 416.3,271.8 416.4,271.8 416.4,271.8 416.5,271.8 416.6,271.8 416.7,271.8 416.7,271.8 416.8,271.8 416.9,271.9 417.0,271.9 417.1,271.9 417.1,271.9 417.2,271.9 417.3,271.9 417.4,271.9 417.5,271.9 417.5,271.9 417.6,271.9 417.7,272.0 417.8,272.0 417.8,272.0 417.9,272.0 418.0,272.0 418.1,272.0 418.2,272.0 418.2,272.0 418.3,272.0 418.4,272.1 418.5,272.1 418.6,272.1 418.6,272.1 418.7,272.1 418.8,272.1 418.9,272.1 418.9,272.1 419.0,272.1 419.1,272.1 419.2,272.2 419.3,272.2 419.3,272.2 419.4,272.2 419.5,272.2 419.6,272.2 419.6,272.2 419.7,272.2 419.8,272.2 419.9,272.2 420.0,272.3 420.0,272.3 420.1,272.3 420.2,272.3 420.3,272.3 420.4,272.3 420.4,272.3 420.5,272.3 420.6,272.3 420.7,272.4 420.7,272.4 420.8,272.4 420.9,272.4 421.0,272.4 421.1,272.4 421.1,272.4 421.2,272.4 421.3,272.4 421.4,272.5 421.5,272.5 421.5,272.5 421.6,272.5 421.7,272.5 421.8,272.5 421.8,272.5 421.9,272.5 422.0,272.5 422.1,272.5 422.2,272.6 422.2,272.6 422.3,272.6 422.4,272.6 422.5,272.6 422.5,272.6 422.6,272.6 422.7,272.6 422.8,272.6 422.9,272.7 422.9,272.7 423.0,272.7 423.1,272.7 423.2,272.7 423.3,272.7 423.3,272.7 423.4,272.7 423.5,272.7 423.6,272.8 423.6,272.8 423.7,272.8 423.8,272.8 423.9,272.8 424.0,272.8 424.0,272.8 424.1,272.8 424.2,272.8 424.3,272.9 424.4,272.9 424.4,272.9 424.5,272.9 424.6,272.9 424.7,272.9 424.7,272.9 424.8,272.9 424.9,272.9 425.0,272.9 425.1,273.0 425.1,273.0 425.2,273.0 425.3,273.0 425.4,273.0 425.4,273.0 425.5,273.0 425.6,273.0 425.7,273.0 425.8,273.1 425.8,273.1 425.9,273.1 426.0,273.1 426.1,273.1 426.2,273.1 426.2,273.1 426.3,273.1 426.4,273.2 426.5,273.2 426.5,273.2 426.6,273.2 426.7,273.2 426.8,273.2 426.9,273.2 426.9,273.2 427.0,273.2 427.1,273.3 427.2,273.3 427.3,273.3 427.3,273.3 427.4,273.3 427.5,273.3 427.6,273.3 427.6,273.3 427.7,273.3 427.8,273.4 427.9,273.4 428.0,273.4 428.0,273.4 428.1,273.4 428.2,273.4 428.3,273.4 428.3,273.4 428.4,273.4 428.5,273.5 428.6,273.5 428.7,273.5 428.7,273.5 428.8,273.5 428.9,273.5 429.0,273.5 429.1,273.5 429.1,273.5 429.2,273.6 429.3,273.6 429.4,273.6 429.4,273.6 429.5,273.6 429.6,273.6 429.7,273.6 429.8,273.6 429.8,273.7 429.9,273.7 430.0,273.7 430.1,273.7 430.1,273.7 430.2,273.7 430.3,273.7 430.4,273.7 430.5,273.7 430.5,273.8 430.6,273.8 430.7,273.8 430.8,273.8 430.9,273.8 430.9,273.8 431.0,273.8 431.1,273.8 431.2,273.9 431.2,273.9 431.3,273.9 431.4,273.9 431.5,273.9 431.6,273.9 431.6,273.9 431.7,273.9 431.8,273.9 431.9,274.0 432.0,274.0 432.0,274.0 432.1,274.0 432.2,274.0 432.3,274.0 432.3,274.0 432.4,274.0 432.5,274.1 432.6,274.1 432.7,274.1 432.7,274.1 432.8,274.1 432.9,274.1 433.0,274.1 433.0,274.1 433.1,274.2 433.2,274.2 433.3,274.2 433.4,274.2 433.4,274.2 433.5,274.2 433.6,274.2 433.7,274.2 433.8,274.2 433.8,274.3 433.9,274.3 434.0,274.3 434.1,274.3 434.1,274.3 434.2,274.3 434.3,274.3 434.4,274.3 434.5,274.4 434.5,274.4 434.6,274.4 434.7,274.4 434.8,274.4 434.9,274.4 434.9,274.4 435.0,274.4 435.1,274.5 435.2,274.5 435.2,274.5 435.3,274.5 435.4,274.5 435.5,274.5 435.6,274.5 435.6,274.5 435.7,274.6 435.8,274.6 435.9,274.6 435.9,274.6 436.0,274.6 436.1,274.6 436.2,274.6 436.3,274.6 436.3,274.7 436.4,274.7 436.5,274.7 436.6,274.7 436.7,274.7 436.7,274.7 436.8,274.7 436.9,274.7 437.0,274.8 437.0,274.8 437.1,274.8 437.2,274.8 437.3,274.8 437.4,274.8 437.4,274.8 437.5,274.8 437.6,274.9 437.7,274.9 437.8,274.9 437.8,274.9 437.9,274.9 438.0,274.9 438.1,274.9 438.1,274.9 438.2,275.0 438.3,275.0 438.4,275.0 438.5,275.0 438.5,275.0 438.6,275.0 438.7,275.0 438.8,275.0 438.8,275.1 438.9,275.1 439.0,275.1 439.1,275.1 439.2,275.1 439.2,275.1 439.3,275.1 439.4,275.1 439.5,275.2 439.6,275.2 439.6,275.2 439.7,275.2 439.8,275.2 439.9,275.2 439.9,275.2 440.0,275.3 440.1,275.3 440.2,275.3 440.3,275.3 440.3,275.3 440.4,275.3 440.5,275.3 440.6,275.3 440.7,275.4 440.7,275.4 440.8,275.4 440.9,275.4 441.0,275.4 441.0,275.4 441.1,275.4 441.2,275.4 441.3,275.5 441.4,275.5 441.4,275.5 441.5,275.5 441.6,275.5 441.7,275.5 441.7,275.5 441.8,275.6 441.9,275.6 442.0,275.6 442.1,275.6 442.1,275.6 442.2,275.6 442.3,275.6 442.4,275.6 442.5,275.7 442.5,275.7 442.6,275.7 442.7,275.7 442.8,275.7 442.8,275.7 442.9,275.7 443.0,275.8 443.1,275.8 443.2,275.8 443.2,275.8 443.3,275.8 443.4,275.8 443.5,275.8 443.6,275.8 443.6,275.9 443.7,275.9 443.8,275.9 443.9,275.9 443.9,275.9 444.0,275.9 444.1,275.9 444.2,276.0 444.3,276.0 444.3,276.0 444.4,276.0 444.5,276.0 444.6,276.0 444.6,276.0 444.7,276.0 444.8,276.1 444.9,276.1 445.0,276.1 445.0,276.1 445.1,276.1 445.2,276.1 445.3,276.1 445.4,276.2 445.4,276.2 445.5,276.2 445.6,276.2 445.7,276.2 445.7,276.2 445.8,276.2 445.9,276.3 446.0,276.3 446.1,276.3 446.1,276.3 446.2,276.3 446.3,276.3 446.4,276.3 446.5,276.4 446.5,276.4 446.6,276.4 446.7,276.4 446.8,276.4 446.8,276.4 446.9,276.4 447.0,276.5 447.1,276.5 447.2,276.5 447.2,276.5 447.3,276.5 447.4,276.5 447.5,276.5 447.5,276.5 447.6,276.6 447.7,276.6 447.8,276.6 447.9,276.6 447.9,276.6 448.0,276.6 448.1,276.6 448.2,276.7 448.3,276.7 448.3,276.7 448.4,276.7 448.5,276.7 448.6,276.7 448.6,276.7 448.7,276.8 448.8,276.8 448.9,276.8 449.0,276.8 449.0,276.8 449.1,276.8 449.2,276.8 449.3,276.9 449.4,276.9 449.4,276.9 449.5,276.9 449.6,276.9 449.7,276.9 449.7,277.0 449.8,277.0 449.9,277.0 450.0,277.0 450.1,277.0 450.1,277.0 450.2,277.0 450.3,277.1 450.4,277.1 450.4,277.1 450.5,277.1 450.6,277.1 450.7,277.1 450.8,277.1 450.8,277.2 450.9,277.2 451.0,277.2 451.1,277.2 451.2,277.2 451.2,277.2 451.3,277.2 451.4,277.3 451.5,277.3 451.5,277.3 451.6,277.3 451.7,277.3 451.8,277.3 451.9,277.3 451.9,277.4 452.0,277.4 452.1,277.4 452.2,277.4 452.2,277.4 452.3,277.4 452.4,277.5 452.5,277.5 452.6,277.5 452.6,277.5 452.7,277.5 452.8,277.5 452.9,277.5 453.0,277.6 453.0,277.6 453.1,277.6 453.2,277.6 453.3,277.6 453.3,277.6 453.4,277.6 453.5,277.7 453.6,277.7 453.7,277.7 453.7,277.7 453.8,277.7 453.9,277.7 454.0,277.8 454.1,277.8 454.1,277.8 454.2,277.8 454.3,277.8 454.4,277.8 454.4,277.8 454.5,277.9 454.6,277.9 454.7,277.9 454.8,277.9 454.8,277.9 454.9,277.9 455.0,278.0 455.1,278.0 455.1,278.0 455.2,278.0 455.3,278.0 455.4,278.0 455.5,278.0 455.5,278.1 455.6,278.1 455.7,278.1 455.8,278.1 455.9,278.1 455.9,278.1 456.0,278.2 456.1,278.2 456.2,278.2 456.2,278.2 456.3,278.2 456.4,278.2 456.5,278.3 456.6,278.3 456.6,278.3 456.7,278.3 456.8,278.3 456.9,278.3 457.0,278.3 457.0,278.4 457.1,278.4 457.2,278.4 457.3,278.4 457.3,278.4 457.4,278.4 457.5,278.5 457.6,278.5 457.7,278.5 457.7,278.5 457.8,278.5 457.9,278.5 458.0,278.6 458.0,278.6 458.1,278.6 458.2,278.6 458.3,278.6 458.4,278.6 458.4,278.6 458.5,278.7 458.6,278.7 458.7,278.7 458.8,278.7 458.8,278.7 458.9,278.7 459.0,278.8 459.1,278.8 459.1,278.8 459.2,278.8 459.3,278.8 459.4,278.8 459.5,278.9 459.5,278.9 459.6,278.9 459.7,278.9 459.8,278.9 459.9,278.9 459.9,279.0 460.0,279.0 460.1,279.0 460.2,279.0 460.2,279.0 460.3,279.0 460.4,279.1 460.5,279.1 460.6,279.1 460.6,279.1 460.7,279.1 460.8,279.1 460.9,279.2 460.9,279.2 461.0,279.2 461.1,279.2 461.2,279.2 461.3,279.2 461.3,279.3 461.4,279.3 461.5,279.3 461.6,279.3 461.7,279.3 461.7,279.3 461.8,279.4 461.9,279.4 462.0,279.4 462.0,279.4 462.1,279.4 462.2,279.4 462.3,279.5 462.4,279.5 462.4,279.5 462.5,279.5 462.6,279.5 462.7,279.5 462.8,279.6 462.8,279.6 462.9,279.6 463.0,279.6 463.1,279.6 463.1,279.7 463.2,279.7 463.3,279.7 463.4,279.7 463.5,279.7 463.5,279.7 463.6,279.8 463.7,279.8 463.8,279.8 463.8,279.8 463.9,279.8 464.0,279.8 464.1,279.9 464.2,279.9 464.2,279.9 464.3,279.9 464.4,279.9 464.5,279.9 464.6,280.0 464.6,280.0 464.7,280.0 464.8,280.0 464.9,280.0 464.9,280.1 465.0,280.1 465.1,280.1 465.2,280.1 465.3,280.1 465.3,280.1 465.4,280.2 465.5,280.2 465.6,280.2 465.7,280.2 465.7,280.2 465.8,280.2 465.9,280.3 466.0,280.3 466.0,280.3 466.1,280.3 466.2,280.3 466.3,280.4 466.4,280.4 466.4,280.4 466.5,280.4 466.6,280.4 466.7,280.4 466.7,280.5 466.8,280.5 466.9,280.5 467.0,280.5 467.1,280.5 467.1,280.6 467.2,280.6 467.3,280.6 467.4,280.6 467.5,280.6 467.5,280.6 467.6,280.7 467.7,280.7 467.8,280.7 467.8,280.7 467.9,280.7 468.0,280.8 468.1,280.8 468.2,280.8 468.2,280.8 468.3,280.8 468.4,280.9 468.5,280.9 468.6,280.9 468.6,280.9 468.7,280.9 468.8,280.9 468.9,281.0 468.9,281.0 469.0,281.0 469.1,281.0 469.2,281.0 469.3,281.1 469.3,281.1 469.4,281.1 469.5,281.1 469.6,281.1 469.6,281.2 469.7,281.2 469.8,281.2 469.9,281.2 470.0,281.2 470.0,281.2 470.1,281.3 470.2,281.3 470.3,281.3 470.4,281.3 470.4,281.3 470.5,281.4 470.6,281.4 470.7,281.4 470.7,281.4 470.8,281.4 470.9,281.5 471.0,281.5 471.1,281.5 471.1,281.5 471.2,281.5 471.3,281.6 471.4,281.6 471.5,281.6 471.5,281.6 471.6,281.6 471.7,281.7 471.8,281.7 471.8,281.7 471.9,281.7 472.0,281.7 472.1,281.8 472.2,281.8 472.2,281.8 472.3,281.8 472.4,281.8 472.5,281.9 472.5,281.9 472.6,281.9 472.7,281.9 472.8,281.9 472.9,282.0 472.9,282.0 473.0,282.0 473.1,282.0 473.2,282.0 473.3,282.1 473.3,282.1 473.4,282.1 473.5,282.1 473.6,282.1 473.6,282.2 473.7,282.2 473.8,282.2 473.9,282.2 474.0,282.2 474.0,282.3 474.1,282.3 474.2,282.3 474.3,282.3 474.4,282.3 474.4,282.4 474.5,282.4 474.6,282.4 474.7,282.4 474.7,282.4 474.8,282.5 474.9,282.5 475.0,282.5 475.1,282.5 475.1,282.5 475.2,282.6 475.3,282.6 475.4,282.6 475.4,282.6 475.5,282.6 475.6,282.7 475.7,282.7 475.8,282.7 475.8,282.7 475.9,282.8 476.0,282.8 476.1,282.8 476.2,282.8 476.2,282.8 476.3,282.9 476.4,282.9 476.5,282.9 476.5,282.9 476.6,282.9 476.7,283.0 476.8,283.0 476.9,283.0 476.9,283.0 477.0,283.0 477.1,283.1 477.2,283.1 477.2,283.1 477.3,283.1 477.4,283.2 477.5,283.2 477.6,283.2 477.6,283.2 477.7,283.2 477.8,283.3 477.9,283.3 478.0,283.3 478.0,283.3 478.1,283.4 478.2,283.4 478.3,283.4 478.3,283.4 478.4,283.4 478.5,283.5 478.6,283.5 478.7,283.5 478.7,283.5 478.8,283.6 478.9,283.6 479.0,283.6 479.1,283.6 479.1,283.6 479.2,283.7 479.3,283.7 479.4,283.7 479.4,283.7 479.5,283.8 479.6,283.8 479.7,283.8 479.8,283.8 479.8,283.8 479.9,283.9 480.0,283.9 480.1,283.9 480.1,283.9 480.2,284.0 480.3,284.0 480.4,284.0 480.5,284.0 480.5,284.0 480.6,284.1 480.7,284.1 480.8,284.1 480.9,284.1 480.9,284.2 481.0,284.2 481.1,284.2 481.2,284.2 481.2,284.3 481.3,284.3 481.4,284.3 481.5,284.3 481.6,284.3 481.6,284.4 481.7,284.4 481.8,284.4 481.9,284.4 482.0,284.5 482.0,284.5 482.1,284.5 482.2,284.5 482.3,284.6 482.3,284.6 482.4,284.6 482.5,284.6 482.6,284.7 482.7,284.7 482.7,284.7 482.8,284.7 482.9,284.7 483.0,284.8 483.0,284.8 483.1,284.8 483.2,284.8 483.3,284.9 483.4,284.9 483.4,284.9 483.5,284.9 483.6,285.0 483.7,285.0 483.8,285.0 483.8,285.0 483.9,285.1 484.0,285.1 484.1,285.1 484.1,285.1 484.2,285.2 484.3,285.2 484.4,285.2 484.5,285.2 484.5,285.3 484.6,285.3 484.7,285.3 484.8,285.3 484.9,285.4 484.9,285.4 485.0,285.4 485.1,285.4 485.2,285.5 485.2,285.5 485.3,285.5 485.4,285.5 485.5,285.6 485.6,285.6 485.6,285.6 485.7,285.6 485.8,285.7 485.9,285.7 485.9,285.7 486.0,285.7 486.1,285.8 486.2,285.8 486.3,285.8 486.3,285.8 486.4,285.9 486.5,285.9 486.6,285.9 486.7,285.9 486.7,286.0 486.8,286.0 486.9,286.0 487.0,286.0 487.0,286.1 487.1,286.1 487.2,286.1 487.3,286.2 487.4,286.2 487.4,286.2 487.5,286.2 487.6,286.3 487.7,286.3 487.8,286.3 487.8,286.3 487.9,286.4 488.0,286.4 488.1,286.4 488.1,286.4 488.2,286.5 488.3,286.5 488.4,286.5 488.5,286.5 488.5,286.6 488.6,286.6 488.7,286.6 488.8,286.7 488.8,286.7 488.9,286.7 489.0,286.7 489.1,286.8 489.2,286.8 489.2,286.8 489.3,286.8 489.4,286.9 489.5,286.9 489.6,286.9 489.6,287.0 489.7,287.0 489.8,287.0 489.9,287.0 489.9,287.1 490.0,287.1 490.1,287.1 490.2,287.2 490.3,287.2 490.3,287.2 490.4,287.2 490.5,287.3 490.6,287.3 490.7,287.3 490.7,287.3 490.8,287.4 490.9,287.4 491.0,287.4 491.0,287.5 491.1,287.5 491.2,287.5 491.3,287.5 491.4,287.6 491.4,287.6 491.5,287.6 491.6,287.7 491.7,287.7 491.7,287.7 491.8,287.8 491.9,287.8 492.0,287.8 492.1,287.8 492.1,287.9 492.2,287.9 492.3,287.9 492.4,288.0 492.5,288.0 492.5,288.0 492.6,288.0 492.7,288.1 492.8,288.1 492.8,288.1 492.9,288.2 493.0,288.2 493.1,288.2 493.2,288.3 493.2,288.3 493.3,288.3 493.4,288.3 493.5,288.4 493.6,288.4 493.6,288.4 493.7,288.5 493.8,288.5 493.9,288.5 493.9,288.6 494.0,288.6 494.1,288.6 494.2,288.7 494.3,288.7 494.3,288.7 494.4,288.7 494.5,288.8 494.6,288.8 494.6,288.8 494.7,288.9 494.8,288.9 494.9,288.9 495.0,289.0 495.0,289.0 495.1,289.0 495.2,289.1 495.3,289.1 495.4,289.1 495.4,289.2 495.5,289.2 495.6,289.2 495.7,289.2 495.7,289.3 495.8,289.3 495.9,289.3 496.0,289.4 496.1,289.4 496.1,289.4 496.2,289.5 496.3,289.5 496.4,289.5 496.5,289.6 496.5,289.6 496.6,289.6 496.7,289.7 496.8,289.7 496.8,289.7 496.9,289.8 497.0,289.8 497.1,289.8 497.2,289.9 497.2,289.9 497.3,289.9 497.4,290.0 497.5,290.0 497.5,290.0 497.6,290.1 497.7,290.1 497.8,290.1 497.9,290.2 497.9,290.2 498.0,290.2 498.1,290.3 498.2,290.3 498.3,290.3 498.3,290.4 498.4,290.4 498.5,290.4 498.6,290.5 498.6,290.5 498.7,290.6 498.8,290.6 498.9,290.6 499.0,290.7 499.0,290.7 499.1,290.7 499.2,290.8 499.3,290.8 499.3,290.8 499.4,290.9 499.5,290.9 499.6,290.9 499.7,291.0 499.7,291.0 499.8,291.1 499.9,291.1 500.0,291.1 500.1,291.2 500.1,291.2 500.2,291.2 500.3,291.3 500.4,291.3 500.4,291.3 500.5,291.4 500.6,291.4 500.7,291.5 500.8,291.5 500.8,291.5 500.9,291.6 501.0,291.6 501.1,291.6 501.2,291.7 501.2,291.7 501.3,291.8 501.4,291.8 501.5,291.8 501.5,291.9 501.6,291.9 501.7,291.9 501.8,292.0 501.9,292.0 501.9,292.1 502.0,292.1 502.1,292.1 502.2,292.2 502.2,292.2 502.3,292.3 502.4,292.3 502.5,292.3 502.6,292.4 502.6,292.4 502.7,292.5 502.8,292.5 502.9,292.5 503.0,292.6 503.0,292.6 503.1,292.6 503.2,292.7 503.3,292.7 503.3,292.8 503.4,292.8 503.5,292.9 503.6,292.9 503.7,292.9 503.7,293.0 503.8,293.0 503.9,293.1 504.0,293.1 504.1,293.1 504.1,293.2 504.2,293.2 504.3,293.3 504.4,293.3 504.4,293.3 504.5,293.4 504.6,293.4 504.7,293.5 504.8,293.5 504.8,293.6 504.9,293.6 505.0,293.6 505.1,293.7 505.1,293.7 505.2,293.8 505.3,293.8 505.4,293.9 505.5,293.9 505.5,293.9 505.6,294.0 505.7,294.0 505.8,294.1 505.9,294.1 505.9,294.2 506.0,294.2 506.1,294.3 506.2,294.3 506.2,294.3 506.3,294.4 506.4,294.4 506.5,294.5 506.6,294.5 506.6,294.6 506.7,294.6 506.8,294.7 506.9,294.7 507.0,294.8 507.0,294.8 507.1,294.8 507.2,294.9 507.3,294.9 507.3,295.0 507.4,295.0 507.5,295.1 507.6,295.1 507.7,295.2 507.7,295.2 507.8,295.3 507.9,295.3 508.0,295.4 508.0,295.4 508.1,295.5 508.2,295.5 508.3,295.6 508.4,295.6 508.4,295.7 508.5,295.7 508.6,295.8 508.7,295.8 508.8,295.9 508.8,295.9 508.9,296.0 509.0,296.0 509.1,296.1 509.1,296.1 509.2,296.2 509.3,296.2 509.4,296.3 509.5,296.3 509.5,296.4 509.6,296.4 509.7,296.5 509.8,296.5 509.9,296.6 509.9,296.6 510.0,296.7 510.1,296.7 510.2,296.8 510.2,296.8 510.3,296.9 510.4,296.9 510.5,297.0 510.6,297.0 510.6,297.1 510.7,297.1 510.8,297.2 510.9,297.3 510.9,297.3 511.0,297.4 511.1,297.4 511.2,297.5 511.3,297.5 511.3,297.6 511.4,297.6 511.5,297.7 511.6,297.8 511.7,297.8 511.7,297.9 511.8,297.9 511.9,298.0 512.0,298.0 512.0,298.1 512.1,298.2 512.2,298.2 512.3,298.3 512.4,298.3 512.4,298.4 512.5,298.4 512.6,298.5 512.7,298.6 512.8,298.6 512.8,298.7 512.9,298.7 513.0,298.8 513.1,298.9 513.1,298.9 513.2,299.0 513.3,299.0 513.4,299.1 513.5,299.2 513.5,299.2 513.6,299.3 513.7,299.4 513.8,299.4 513.8,299.5 513.9,299.5 514.0,299.6 514.1,299.7 514.2,299.7 514.2,299.8 514.3,299.9 514.4,299.9 514.5,300.0 514.6,300.1 514.6,300.1 514.7,300.2 514.8,300.3 514.9,300.3 514.9,300.4 515.0,300.5 515.1,300.5 515.2,300.6 515.3,300.7 515.3,300.7 515.4,300.8 515.5,300.9 515.6,300.9 515.7,301.0 515.7,301.1 515.8,301.1 515.9,301.2 516.0,301.3 516.0,301.4 516.1,301.4 516.2,301.5 516.3,301.6 516.4,301.6 516.4,301.7 516.5,301.8 516.6,301.9 516.7,301.9 516.7,302.0 516.8,302.1 516.9,302.2 517.0,302.2 517.1,302.3 517.1,302.4 517.2,302.5 517.3,302.5 517.4,302.6 517.5,302.7 517.5,302.8 517.6,302.9 517.7,302.9 517.8,303.0 517.8,303.1 517.9,303.2 518.0,303.3 518.1,303.3 518.2,303.4 518.2,303.5 518.3,303.6 518.4,303.7 518.5,303.8 518.6,303.8 518.6,303.9 518.7,304.0 518.8,304.1 518.9,304.2 518.9,304.3 519.0,304.4 519.1,304.4 519.2,304.5 519.3,304.6 519.3,304.7 519.4,304.8 519.5,304.9 519.6,305.0 519.6,305.1 519.7,305.2 519.8,305.3 519.9,305.3 520.0,305.4 520.0,305.5 520.1,305.6 520.2,305.7 520.3,305.8 520.4,305.9 520.4,306.0 520.5,306.1 520.6,306.2 520.7,306.3 520.7,306.4 520.8,306.5 520.9,306.6 521.0,306.7 521.1,306.8 521.1,306.9 521.2,307.0 521.3,307.1 521.4,307.2 521.4,307.3 521.5,307.4 521.6,307.5 521.7,307.7 521.8,307.8 521.8,307.9 521.9,308.0 522.0,308.1 522.1,308.2 522.2,308.3 522.2,308.4 522.3,308.6 522.4,308.7 522.5,308.8 522.5,308.9 522.6,309.0 522.7,309.1 522.8,309.3 522.9,309.4 522.9,309.5 523.0,309.6 523.1,309.8 523.2,309.9 523.3,310.0 523.3,310.1 523.4,310.3 523.5,310.4 523.6,310.5 523.6,310.7 523.7,310.8 523.8,310.9 523.9,311.1 524.0,311.2 524.0,311.3 524.1,311.5 524.2,311.6 524.3,311.8 524.3,311.9 524.4,312.0 524.5,312.2 524.6,312.3 524.7,312.5 524.7,312.6 524.8,312.8 524.9,312.9 525.0,313.1 525.1,313.3 525.1,313.4 525.2,313.6 525.3,313.7 525.4,313.9 525.4,314.1 525.5,314.2 525.6,314.4 525.7,314.6 525.8,314.7 525.8,314.9 525.9,315.1 526.0,315.3 526.1,315.5 526.2,315.6 526.2,315.8 526.3,316.0 526.4,316.2 526.5,316.4 526.5,316.6 526.6,316.8 526.7,317.0 526.8,317.2 526.9,317.4 526.9,317.6 527.0,317.8 527.1,318.0 527.2,318.3 527.2,318.5 527.3,318.7 527.4,318.9 527.5,319.2 527.6,319.4 527.6,319.6 527.7,319.9 527.8,320.1 527.9,320.4 528.0,320.6 528.0,320.9 528.1,321.2 528.2,321.4 528.3,321.7 528.3,322.0 528.4,322.3 528.5,322.6 528.6,322.9 528.7,323.2 528.7,323.5 528.8,323.8 528.9,324.1 529.0,324.5 529.1,324.8 529.1,325.1 529.2,325.5 529.3,325.8 529.4,326.2 529.4,326.6 529.5,327.0 529.6,327.4 529.7,327.8 529.8,328.2 529.8,328.7 529.9,329.1 530.0,329.6 530.1,330.0 530.1,330.5 530.2,331.0 530.3,331.6 530.4,332.1 530.5,332.7 530.5,333.3 530.6,333.9 530.7,334.5 530.8,335.2 530.9,335.9 530.9,336.6 531.0,337.4 531.1,338.2 531.2,339.0 531.2,339.9 531.3,340.9 531.4,341.9 531.5,343.1 531.6,344.3 531.6,345.6 531.7,347.0 531.8,348.6 531.9,350.3 532.0,352.3 532.0,354.6 532.1,357.4 532.2,360.7 532.3,365.0 532.3,371.1 532.4,381.5" fill="none" stroke="#0000ff" stroke-width="1" shape-rendering="crispEdges"/><rect x="211" y="196" width="53" height="4" fill="#008000"/><rect x="281" y="265" width="252" height="2" fill="#008000"/></svg>
<div class="t" style="left:71.0px;width:600px;text-align:center;top:161.29px;font-size:12.3px;line-height:12.3px;font-weight:normal;color:#000;letter-spacing:0.2px">Frequency Response</div>
<div class="t" style="left:-394px;width:600px;text-align:right;top:190.89px;font-size:12.3px;line-height:12.3px;font-weight:normal;color:#000;">0</div>
<div class="t" style="left:-394px;width:600px;text-align:right;top:277.89px;font-size:12.3px;line-height:12.3px;font-weight:normal;color:#000;"><span style="display:inline-block;width:5px;height:1px;background:#000;margin-right:2.5px;position:relative;top:-4px"></span>50</div>
<div class="t" style="left:-394px;width:600px;text-align:right;top:363.89px;font-size:12.3px;line-height:12.3px;font-weight:normal;color:#000;"><span style="display:inline-block;width:5px;height:1px;background:#000;margin-right:2.5px;position:relative;top:-4px"></span>100</div>
<div class="t" style="left:-394px;width:600px;text-align:right;top:449.89px;font-size:12.3px;line-height:12.3px;font-weight:normal;color:#000;"><span style="display:inline-block;width:5px;height:1px;background:#000;margin-right:2.5px;position:relative;top:-4px"></span>150</div>
<div class="t" style="left:-88.5px;width:600px;text-align:center;top:461.59px;font-size:12.3px;line-height:12.3px;font-weight:normal;color:#000;">0</div>
<div class="t" style="left:-31px;width:600px;text-align:center;top:461.59px;font-size:12.3px;line-height:12.3px;font-weight:normal;color:#000;">2000</div>
<div class="t" style="left:27.5px;width:600px;text-align:center;top:461.59px;font-size:12.3px;line-height:12.3px;font-weight:normal;color:#000;">4000</div>
<div class="t" style="left:86px;width:600px;text-align:center;top:461.59px;font-size:12.3px;line-height:12.3px;font-weight:normal;color:#000;">6000</div>
<div class="t" style="left:144px;width:600px;text-align:center;top:461.59px;font-size:12.3px;line-height:12.3px;font-weight:normal;color:#000;">8000</div>
<div class="t" style="left:202px;width:600px;text-align:center;top:461.59px;font-size:12.3px;line-height:12.3px;font-weight:normal;color:#000;">10000</div>
<div class="t" style="left:70.80000000000001px;width:600px;text-align:center;top:476.59px;font-size:12.3px;line-height:12.3px;font-weight:normal;color:#000;">Frequency</div>
<div style="left:172px;top:320px;width:0;height:0;"><div style="white-space:pre;filter:url(#crisp3);left:0;top:0;transform:translate(-50%,-100%) rotate(-90deg);transform-origin:50% 100%;font-size:12.7px;line-height:12.7px;">Magnitude (dB)</div></div>
<div style="left:555px;top:146px;width:150px;height:355px;background:#9a9864;"></div>
<div style="left:555px;top:146px;width:150px;height:1px;background:#6c6c70;"></div>
<div style="left:555px;top:146px;width:1px;height:355px;background:#6c6c70;"></div>
<div style="left:556px;top:147px;width:149px;height:1px;background:#a09c14;"></div>
<div style="left:556px;top:147px;width:1px;height:354px;background:#a09c14;"></div>
<div style="left:703px;top:147px;width:1px;height:354px;background:#6c6c70;"></div>
<div style="left:704px;top:146px;width:1px;height:355px;background:#a09c14;"></div>
<div style="left:555px;top:500px;width:149px;height:1px;background:#6c6c70;"></div>
<div style="left:557px;top:151px;width:146px;height:20px;background:#9c6868;"></div>
<div class="t" style="left:330px;width:600px;text-align:center;top:152.23px;font-size:14.5px;line-height:14.5px;font-weight:bold;color:#000;">Measurements</div>
<div class="t" style="left:563.5px;top:197.19px;font-size:12.3px;line-height:12.3px;font-weight:normal;color:#000;">Order</div>
<div class="t" style="left:604.3px;top:197.19px;font-size:12.3px;line-height:12.3px;font-weight:normal;color:#000;">5</div>
<div style="left:557px;top:261px;width:146px;height:85px;background:#a09c14;"></div>
<div style="left:557px;top:261px;width:145px;height:84px;background:#6c6c70;"></div>
<div style="left:558px;top:262px;width:143px;height:82px;background:#a09c14;"></div>
<div style="left:559px;top:263px;width:142px;height:81px;background:#9a9864;"></div>
<div style="left:561.6px;top:256px;width:60px;height:10px;background:#9a9864;"></div>
<div class="t" style="left:564.6px;top:255.09px;font-size:12.3px;line-height:12.3px;font-weight:normal;color:#000;">Passband</div>
<div style="left:557px;top:361px;width:146px;height:85px;background:#a09c14;"></div>
<div style="left:557px;top:361px;width:145px;height:84px;background:#6c6c70;"></div>
<div style="left:558px;top:362px;width:143px;height:82px;background:#a09c14;"></div>
<div style="left:559px;top:363px;width:142px;height:81px;background:#9a9864;"></div>
<div style="left:562.8px;top:356px;width:58px;height:10px;background:#9a9864;"></div>
<div class="t" style="left:565.8px;top:355.09px;font-size:12.3px;line-height:12.3px;font-weight:normal;color:#000;">Stopband</div>
<div class="t" style="left:563.8px;top:371.59px;font-size:12.3px;line-height:12.3px;font-weight:normal;color:#000;">Actual Fs</div>
<div class="t" style="left:626px;top:371.59px;font-size:12.3px;line-height:12.3px;font-weight:normal;color:#000;">2172</div>
</body></html>
